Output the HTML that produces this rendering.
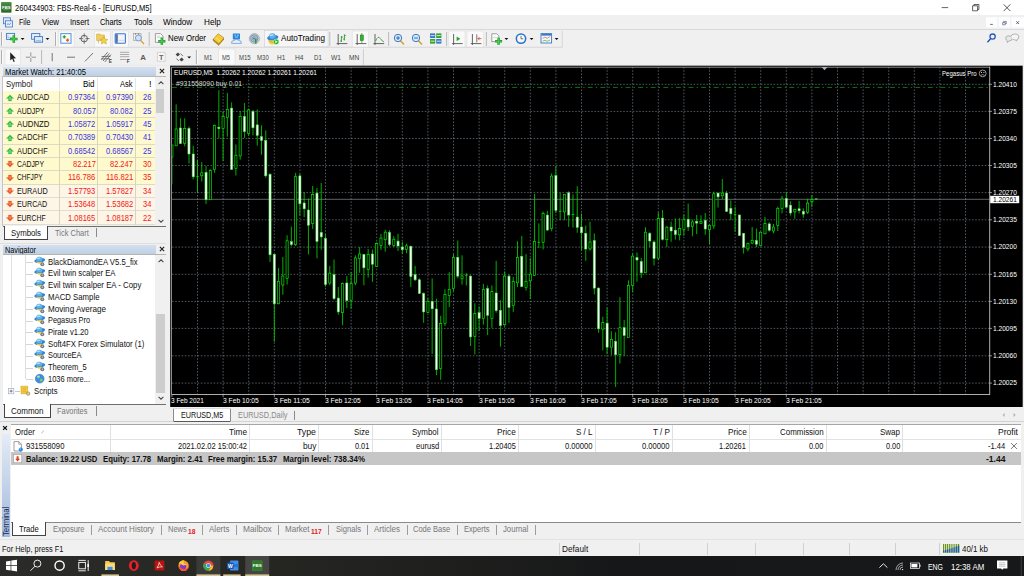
<!DOCTYPE html>
<html><head><meta charset="utf-8"><title>260434903: FBS-Real-6 - [EURUSD,M5]</title>
<style>
*{box-sizing:border-box;margin:0;padding:0}
html,body{width:1024px;height:576px;overflow:hidden;background:#f0f0f0}
body{position:relative;font-family:"Liberation Sans",sans-serif;font-size:9px;color:#000;line-height:1}
.a{position:absolute}
.t{position:absolute;white-space:pre;transform-origin:0 50%}
svg{position:absolute;left:0;top:0;overflow:visible}
.gr{stroke:#909eae;stroke-width:0.55;stroke-dasharray:1.6 1.6}
.wk{stroke:#00e400;stroke-width:0.78}
.dj2{stroke:#20ff20;stroke-width:1.1}
.dj{stroke:#00e000;stroke-width:0.8}
.bh{fill:#000;stroke:#00ea00;stroke-width:0.68}
.bw{fill:#fff;stroke:#40e040;stroke-width:0.58}

</style></head>
<body>
<div class="a" style="left:0px;top:0px;width:1024px;height:15px;background:#fff;"></div>
<svg class="a" style="left:1px;top:2.2px" width="11" height="11" viewBox="0 0 11 11"><defs><linearGradient id="fg" x1="0" y1="0" x2="0" y2="1"><stop offset="0" stop-color="#4a8a48"/><stop offset="1" stop-color="#2a6428"/></linearGradient></defs><rect x="0" y="0" width="10.6" height="10.7" rx="0.8" fill="#5a9a52"/><rect x="0.5" y="0.5" width="9.6" height="9.7" rx="0.5" fill="url(#fg)"/><text x="5.3" y="6.6" font-family="Liberation Sans,sans-serif" font-weight="bold" font-size="4.2" fill="#fff" text-anchor="middle">FBS</text><rect x="2.2" y="7.6" width="6.2" height="0.5" fill="#9fc89a"/></svg>
<span class="t" style="left:14.80px;top:1.60px;height:11.5px;line-height:11.5px;font-size:9.6px;color:#000;transform:scaleX(0.7853);">260434903: FBS-Real-6 - [EURUSD,M5]</span>
<svg class="a" style="left:930px;top:0px" width="94" height="15" viewBox="0 0 94 15"><path d="M11.7 7.6 H18.2" stroke="#222" stroke-width="0.7" fill="none"/><path d="M42.6 5.8 H47.6 V10.8 H42.6 Z M43.9 5.8 V4.5 H48.9 V9.5 H47.6" stroke="#222" stroke-width="0.7" fill="none"/><path d="M73.6 4.3 L80.4 11.1 M80.4 4.3 L73.6 11.1" stroke="#222" stroke-width="0.75" fill="none"/></svg>
<div class="a" style="left:0px;top:15px;width:1024px;height:15px;background:#f0f0f0;"></div>
<svg class="a" style="left:2.8px;top:16.8px" width="10" height="11" viewBox="0 0 10 11"><rect x="0.5" y="0.8" width="7" height="6" fill="#dce9fa" stroke="#3f74c8" stroke-width="0.8"/><rect x="2.5" y="3.8" width="7" height="6.2" fill="#eaf2fd" stroke="#3f74c8" stroke-width="0.8"/><path d="M3.8 8.2 L5 6.4 L6.3 8 L8 5.6" stroke="#3a67b5" stroke-width="0.6" fill="none"/></svg>
<span class="t" style="left:18.50px;top:16.00px;height:11.5px;line-height:11.5px;font-size:9.6px;color:#000;transform:scaleX(0.7434);">File</span>
<span class="t" style="left:41.70px;top:16.00px;height:11.5px;line-height:11.5px;font-size:9.6px;color:#000;transform:scaleX(0.8242);">View</span>
<span class="t" style="left:69.70px;top:16.00px;height:11.5px;line-height:11.5px;font-size:9.6px;color:#000;transform:scaleX(0.7917);">Insert</span>
<span class="t" style="left:100.20px;top:16.00px;height:11.5px;line-height:11.5px;font-size:9.6px;color:#000;transform:scaleX(0.7713);">Charts</span>
<span class="t" style="left:133.50px;top:16.00px;height:11.5px;line-height:11.5px;font-size:9.6px;color:#000;transform:scaleX(0.8257);">Tools</span>
<span class="t" style="left:163.20px;top:16.00px;height:11.5px;line-height:11.5px;font-size:9.6px;color:#000;transform:scaleX(0.8586);">Window</span>
<span class="t" style="left:203.70px;top:16.00px;height:11.5px;line-height:11.5px;font-size:9.6px;color:#000;transform:scaleX(0.8513);">Help</span>
<svg class="a" style="left:984px;top:16px" width="40" height="13" viewBox="0 0 40 13"><rect x="2" y="1.2" width="11.4" height="10.4" fill="#fdfdfd"/><rect x="14.6" y="1.2" width="11.6" height="10.4" fill="#fdfdfd"/><rect x="27.4" y="1.2" width="12.6" height="10.4" fill="#fdfdfd"/><path d="M6.2 8.4 H8.8" stroke="#3a4a78" stroke-width="0.8"/><path d="M18.6 6.6 H21.2 V8.8 H18.6 Z M19.6 6.6 V5.4 H22.3 V7.7 H21.2" stroke="#3a4a78" stroke-width="0.6" fill="none"/><path d="M32.3 5.2 L35 8 M35 5.2 L32.3 8" stroke="#3a4a78" stroke-width="0.8"/></svg>
<div class="a" style="left:0px;top:29px;width:1024px;height:1px;background:#d9d9d9;"></div>
<svg class="a" style="left:0px;top:0px" width="1024" height="48" viewBox="0 0 1024 48"><path d="M0 47.3 H562.3 V31" stroke="#d2d2d2" stroke-width="0.8" fill="none"/><path d="M1.6 32 V46" stroke="#a8a8a8" stroke-width="1"/><path d="M2.6 32 V46" stroke="#fff" stroke-width="0.8"/><rect x="6.6" y="33.4" width="8" height="6" fill="#e8f1fc" stroke="#3b78c4" stroke-width="0.9"/><path d="M8 37.8 V35.4 M8 37.8 H12" stroke="#5b8fd0" stroke-width="0.5" fill="none"/><path d="M13.8 35.2 V42.8 M10 39 H17.6" stroke="#1e9a28" stroke-width="2.5"/><path d="M13.8 35.8 V42.2 M10.6 39 H17" stroke="#4cd34c" stroke-width="1.1"/><path d="M20.700000000000003 37.9 H24.5 L22.6 39.9Z" fill="#111"/><rect x="31.6" y="33.6" width="8.2" height="5.6" fill="#e8f1fc" stroke="#3b78c4" stroke-width="0.9"/><rect x="34.4" y="36.6" width="8.2" height="5.6" fill="#dfeafa" stroke="#3b78c4" stroke-width="0.9"/><path d="M35.8 40.6 H41" stroke="#5b8fd0" stroke-width="0.5"/><path d="M45.6 37.9 H49.4 L47.5 39.9Z" fill="#111"/><path d="M55.6 32 V46" stroke="#a8a8a8" stroke-width="1"/><path d="M56.6 32 V46" stroke="#fff" stroke-width="0.8"/><rect x="58.2" y="31" width="16" height="16" fill="#f9f9f9" stroke="#dedede" stroke-width="0.6"/><rect x="60.8" y="33.6" width="10.2" height="9.6" fill="#fff" stroke="#5b9be0" stroke-width="1.1"/><path d="M64.3 35 L66.5 37.2 H65.2 V38.4 H63.4 V37.2 H62.1Z" fill="#2fa32f"/><path d="M67.6 42 L65.4 39.8 H66.7 V38.6 H68.5 V39.8 H69.8Z" fill="#e0582a"/><circle cx="84.2" cy="38.6" r="3.3" fill="none" stroke="#555" stroke-width="0.9"/><path d="M84.2 33.4 V43.8 M79 38.6 H89.4" stroke="#555" stroke-width="0.8"/><circle cx="84.2" cy="38.6" r="1.2" fill="#f0f0f0"/><rect x="94.3" y="31" width="16" height="16" fill="#f9f9f9" stroke="#dedede" stroke-width="0.6"/><path d="M96.6 34 H100 L100.8 35 H104.4 V40.6 H96.6Z" fill="#f0cf5a" stroke="#c8a030" stroke-width="0.5"/><path d="M98.4 40.6 V43.4" stroke="#888" stroke-width="0.5"/><path d="M103.8 36.6 L105 39.2 L107.8 39.5 L105.7 41.3 L106.4 44 L103.8 42.6 L101.4 44 L102 41.3 L99.9 39.5 L102.7 39.2Z" fill="#f5d23c" stroke="#c09a20" stroke-width="0.5"/><rect x="112.6" y="31" width="16" height="16" fill="#f9f9f9" stroke="#dedede" stroke-width="0.6"/><rect x="115.2" y="33.8" width="10.2" height="9.4" rx="0.8" fill="#eef4fc" stroke="#3b78c4" stroke-width="1.1"/><rect x="115.6" y="34.2" width="2.2" height="8.6" fill="#3b78c4"/><path d="M116.7 35.6 V40" stroke="#e04030" stroke-width="0.5"/><path d="M118.6 40.4 H124.6" stroke="#d8a0a0" stroke-width="0.4"/><rect x="133.4" y="33.4" width="7.6" height="7" fill="#f4f0e0" stroke="#9a9a9a" stroke-width="0.6"/><circle cx="138.4" cy="38" r="3" fill="#cfe4f8" stroke="#5b8fd0" stroke-width="0.8"/><path d="M140.6 40.4 L144 44" stroke="#d8a020" stroke-width="1.3"/><path d="M135.6 33 V35 M138.6 33 V35" stroke="#666" stroke-width="0.6"/><path d="M149.2 32 V46" stroke="#b4b4b4" stroke-width="0.9"/><path d="M155.4 33.6 H160.6 L163 36 V42.4 H155.4Z" fill="#fff" stroke="#777" stroke-width="0.7"/><path d="M156.8 36 H160 M156.8 37.6 H161" stroke="#aaa" stroke-width="0.5"/><path d="M161.8 37.6 V44.8 M158.2 41.2 H165.4" stroke="#1e9a28" stroke-width="2.4"/><path d="M161.8 38.2 V44.2 M158.8 41.2 H164.8" stroke="#4cd34c" stroke-width="1"/><path d="M213 39.4 L218.2 33.8 L224 38 L218.6 43.8Z" fill="#f6cc34" stroke="#a87818" stroke-width="0.6"/><path d="M213 39.4 L213.4 41 L218.8 45.4 L218.6 43.8Z" fill="#c89420" stroke="#8a6210" stroke-width="0.4"/><path d="M218.6 43.8 L218.8 45.4 L224 39.4 L224 38Z" fill="#b88418"/><path d="M215.6 37.6 L220.6 41.4" stroke="#fbe890" stroke-width="0.8"/><rect x="232.8" y="33.4" width="7.2" height="6" rx="0.6" fill="#2a86dc"/><path d="M234.4 35.2 H236 M237 35.2 H238.8 M235 37 H238" stroke="#d8ecff" stroke-width="0.7"/><path d="M231.6 43.4 Q231 40.6 234 40.4 Q236.4 38.4 238.8 40.4 Q241.8 40.6 241.4 43.4Z" fill="#e8f0fa" stroke="#5b8fd0" stroke-width="0.7"/><circle cx="254.4" cy="38.6" r="5.2" fill="#c2cad0" stroke="#98a2aa" stroke-width="0.6"/><circle cx="254.2" cy="38.4" r="3.6" fill="none" stroke="#6a86a2" stroke-width="0.8"/><circle cx="254.2" cy="38.4" r="2" fill="none" stroke="#6a86a2" stroke-width="0.6"/><circle cx="254" cy="38.4" r="0.9" fill="#2a6acc"/><rect x="255" y="38.6" width="1.5" height="5" fill="#2a9a3a"/><rect x="264.6" y="30.6" width="63.5" height="16.2" fill="#f6f6f6" stroke="#d4d4d4" stroke-width="0.7"/><path d="M267.6 38.6 L269.4 43.6 Q272.6 45.4 276 43.4 L277.6 38.6Z" fill="#f0cc40"/><path d="M268.6 41 Q272.6 43.2 276.8 41" stroke="#c89a20" stroke-width="0.5" fill="none"/><g transform="rotate(-8 272.6 37)"><ellipse cx="272.7" cy="37.6" rx="5.7" ry="2.6" fill="#2f86d4"/><ellipse cx="272.5" cy="36" rx="3.3" ry="2.7" fill="#5eaeea"/><ellipse cx="272" cy="35" rx="2" ry="0.9" fill="#b0dcf8"/></g><circle cx="276.2" cy="41.8" r="2.7" fill="#22b022" stroke="#eaffea" stroke-width="0.5"/><path d="M275.3 40.3 L277.8 41.8 L275.3 43.3Z" fill="#fff"/><path d="M330 32 V46" stroke="#a8a8a8" stroke-width="1"/><path d="M331 32 V46" stroke="#fff" stroke-width="0.8"/><path d="M338.2 34 V45 M336.6 43.6 H347.4" stroke="#555" stroke-width="0.9" fill="none"/><path d="M341.4 36 V42 M340.2 41 H341.4 M341.4 37.2 H342.8" stroke="#2a9a2a" stroke-width="0.9" fill="none"/><path d="M344.4 34.4 V40.4 M343.2 39.2 H344.4 M344.4 35.6 H345.8" stroke="#2a9a2a" stroke-width="0.9" fill="none"/><rect x="352.2" y="31" width="16.4" height="16" fill="#f9f9f9" stroke="#dedede" stroke-width="0.6"/><path d="M357.2 34 V45 M355.6 43.6 H366.4" stroke="#555" stroke-width="0.9" fill="none"/><path d="M361.8 33 V43" stroke="#1a7a1a" stroke-width="0.6"/><rect x="360.2" y="35" width="3.2" height="5.6" fill="#2fb02f" stroke="#1a7a1a" stroke-width="0.5"/><path d="M375 34 V45 M373.4 43.6 H384.2" stroke="#555" stroke-width="0.9" fill="none"/><path d="M375.6 41 Q378 35 380.4 38.6 T384 41.6" stroke="#2a9a2a" stroke-width="0.8" fill="none"/><path d="M388.6 32 V46" stroke="#b4b4b4" stroke-width="0.9"/><path d="M400.4 40.8 L404 44.6" stroke="#d8a020" stroke-width="1.5"/><circle cx="398" cy="38" r="3.7" fill="#d8ebfb" stroke="#3b78c4" stroke-width="1"/><path d="M396 38 H400" stroke="#2a5aa0" stroke-width="0.9"/><path d="M398 36 V40" stroke="#2a5aa0" stroke-width="0.9"/><path d="M418.4 40.8 L422 44.6" stroke="#d8a020" stroke-width="1.5"/><circle cx="416" cy="38" r="3.7" fill="#d8ebfb" stroke="#3b78c4" stroke-width="1"/><path d="M414 38 H418" stroke="#2a5aa0" stroke-width="0.9"/><rect x="430" y="33.4" width="5.2" height="4.6" fill="#3b78c4"/><rect x="436.2" y="33.4" width="5.2" height="4.6" fill="#2fa32f"/><rect x="430" y="39" width="5.2" height="4.6" fill="#2fa32f"/><rect x="436.2" y="39" width="5.2" height="4.6" fill="#3b78c4"/><path d="M430.6 35.6 H434.6 M436.8 35.6 H440.8 M430.6 41.2 H434.6 M436.8 41.2 H440.8" stroke="#fff" stroke-width="0.8"/><path d="M446.6 32 V46" stroke="#b4b4b4" stroke-width="0.9"/><rect x="448.8" y="31" width="16.2" height="16" fill="#f9f9f9" stroke="#dedede" stroke-width="0.6"/><path d="M453.6 34 V45 M452 43.6 H462.6" stroke="#555" stroke-width="0.9" fill="none"/><path d="M456.6 36.4 L460.4 38.8 L456.6 41.2Z" fill="#2fa32f"/><rect x="467" y="31" width="16.6" height="16" fill="#f9f9f9" stroke="#dedede" stroke-width="0.6"/><path d="M472.4 34 V45 M470.8 43.6 H481.4" stroke="#555" stroke-width="0.9" fill="none"/><path d="M476.8 34.4 V42.4" stroke="#555" stroke-width="0.8"/><path d="M478 38.6 H481.4 M479.6 37 L478 38.6 L479.6 40.2" stroke="#d8481e" stroke-width="0.8" fill="none"/><path d="M486.4 32 V46" stroke="#b4b4b4" stroke-width="0.9"/><path d="M491.8 33.8 H496.8 L498.8 35.8 V41.6 H491.8Z" fill="#fff" stroke="#777" stroke-width="0.7"/><path d="M493 38.4 L494.4 36.6 L496 38.2 L497.6 36.8" stroke="#999" stroke-width="0.5" fill="none"/><path d="M498.6 37.8 V44.8 M495.1 41.3 H502.1" stroke="#1e9a28" stroke-width="2.4"/><path d="M498.6 38.4 V44.2 M495.7 41.3 H501.5" stroke="#4cd34c" stroke-width="1"/><path d="M504.5 37.9 H508.29999999999995 L506.4 39.9Z" fill="#111"/><circle cx="521" cy="38.6" r="5.4" fill="#2a72c8"/><circle cx="521" cy="38.6" r="3.9" fill="#f4f8fc"/><path d="M521 36 V38.8 H523.2" stroke="#444" stroke-width="0.7" fill="none"/><path d="M529.7 37.9 H533.5 L531.6 39.9Z" fill="#111"/><rect x="541" y="33.6" width="10.6" height="9.4" fill="#f4f8fc" stroke="#3b78c4" stroke-width="0.9"/><rect x="541.4" y="34" width="9.8" height="1.6" fill="#3b78c4"/><path d="M542.6 38.4 L545 37 L547 38.4 L550 36.6" stroke="#d8481e" stroke-width="0.6" fill="none"/><path d="M542.6 41.2 L545 40.2 L547 41.4 L550 40" stroke="#2a9a2a" stroke-width="0.6" fill="none"/><path d="M554.7 37.9 H558.5 L556.6 39.9Z" fill="#111"/><circle cx="992.6" cy="36.6" r="2.6" fill="#eaf2fc" stroke="#2a5ab4" stroke-width="1.3"/><path d="M990.6 38.8 L987.4 42.2" stroke="#2a5ab4" stroke-width="1.5"/><path d="M1006 39.2 Q1005 36.2 1008.6 35.8 Q1012.2 35.6 1012.4 38.2 Q1012.4 40.8 1008.8 41 L1007.4 42.6 L1007.2 40.8 Q1006.2 40.4 1006 39.2Z" fill="#e8e8e8" stroke="#8a8a8a" stroke-width="0.6"/><path d="M1011 36.4 Q1011.4 33.8 1015 34 Q1019 34.2 1018.8 37 Q1018.6 39.4 1016.8 39.6 L1016.6 41 L1015 39.8 Q1013.4 39.8 1012.6 39.2" fill="#f4f4f4" stroke="#8a8a8a" stroke-width="0.6"/></svg>
<span class="t" style="left:168.00px;top:31.90px;height:11.5px;line-height:11.5px;font-size:9.6px;color:#000;transform:scaleX(0.8191);">New Order</span>
<span class="t" style="left:281.00px;top:31.90px;height:11.5px;line-height:11.5px;font-size:9.6px;color:#000;transform:scaleX(0.8474);">AutoTrading</span>
<svg class="a" style="left:0px;top:0px" width="1024" height="66" viewBox="0 0 1024 66"><path d="M0 65.4 H1024" stroke="#e4e4e4" stroke-width="0.6" fill="none"/><path d="M1.6 50 V64" stroke="#a8a8a8" stroke-width="1"/><path d="M2.6 50 V64" stroke="#fff" stroke-width="0.8"/><rect x="5" y="49" width="15.6" height="16" fill="#f9f9f9" stroke="#dedede" stroke-width="0.6"/><path d="M10.2 52.2 V60.6 L12.2 58.8 L13.6 62 L14.8 61.4 L13.4 58.4 L16 58.2Z" fill="#222"/><path d="M30.8 52.4 V62 M25.8 57.2 H36" stroke="#8a8a8a" stroke-width="0.9"/><rect x="30" y="56.4" width="1.6" height="1.6" fill="#f0f0f0"/><path d="M41.6 50 V64" stroke="#b4b4b4" stroke-width="0.9"/><path d="M52.2 53 V61.2" stroke="#666" stroke-width="0.9"/><path d="M67 57.2 H75" stroke="#666" stroke-width="0.9"/><path d="M85 61.4 L93 53" stroke="#555" stroke-width="0.8"/><path d="M101.4 59.6 L107.6 52.2 M103 61 L109.4 53.4 M104.8 62 L111 54.6 M101.6 56.6 L110.6 56.2 M101 59 L109.6 58.6" stroke="#555" stroke-width="0.75"/><text x="108.8" y="63.3" font-family="Liberation Sans,sans-serif" font-weight="bold" font-size="4.8" fill="#444">E</text><path d="M120 52.3 H129.2 M120 54.5 H129.2 M120 56.7 H129.2 M120 59.5 H126.4" stroke="#8c8c8c" stroke-width="0.7"/><text x="126.8" y="63.3" font-family="Liberation Sans,sans-serif" font-weight="bold" font-size="4.8" fill="#444">F</text><text x="140.2" y="59.8" font-family="Liberation Sans,sans-serif" font-weight="bold" font-size="7.8" fill="#5a5a5a">A</text><rect x="157.4" y="52.4" width="7.8" height="9" fill="#f6f6f6" stroke="#a0a0a0" stroke-width="0.6" stroke-dasharray="0.8 0.6"/><text x="159" y="60" font-family="Liberation Sans,sans-serif" font-weight="bold" font-size="7.4" fill="#666">T</text><path d="M175.6 54.4 L178 52.4 L180 54.6 L177.6 56.4Z M179.4 59.4 L181.8 57.6 L183.8 59.8 L181.4 61.6Z" fill="#444"/><path d="M176.4 58.6 L179 61 M180.4 53.6 L183 56" stroke="#444" stroke-width="0.7"/><path d="M187.29999999999998 56.5 H191.1 L189.2 58.5Z" fill="#111"/><path d="M196.4 50 V64" stroke="#a8a8a8" stroke-width="1"/><path d="M197.4 50 V64" stroke="#fff" stroke-width="0.8"/><rect x="218.6" y="49" width="16.4" height="16" fill="#f9f9f9" stroke="#dedede" stroke-width="0.6"/><path d="M363.4 49 V65" stroke="#c4c4c4" stroke-width="0.8"/></svg>
<span class="t" style="left:204.20px;top:53.95px;height:8.6px;line-height:8.6px;font-size:7.2px;color:#444;transform:scaleX(0.8300);">M1</span>
<span class="t" style="left:222.00px;top:53.95px;height:8.6px;line-height:8.6px;font-size:7.2px;color:#444;transform:scaleX(0.8000);">M5</span>
<span class="t" style="left:239.00px;top:53.95px;height:8.6px;line-height:8.6px;font-size:7.2px;color:#444;transform:scaleX(0.8366);">M15</span>
<span class="t" style="left:257.20px;top:53.95px;height:8.6px;line-height:8.6px;font-size:7.2px;color:#444;transform:scaleX(0.8438);">M30</span>
<span class="t" style="left:277.20px;top:53.95px;height:8.6px;line-height:8.6px;font-size:7.2px;color:#444;transform:scaleX(0.9019);">H1</span>
<span class="t" style="left:295.00px;top:53.95px;height:8.6px;line-height:8.6px;font-size:7.2px;color:#444;transform:scaleX(0.9236);">H4</span>
<span class="t" style="left:313.70px;top:53.95px;height:8.6px;line-height:8.6px;font-size:7.2px;color:#444;transform:scaleX(0.8475);">D1</span>
<span class="t" style="left:331.00px;top:53.95px;height:8.6px;line-height:8.6px;font-size:7.2px;color:#444;transform:scaleX(0.9275);">W1</span>
<span class="t" style="left:348.70px;top:53.95px;height:8.6px;line-height:8.6px;font-size:7.2px;color:#444;transform:scaleX(0.9207);">MN</span>
<div class="a" style="left:0px;top:66px;width:168px;height:178px;background:#f0f0f0;"></div>
<div class="a" style="left:2.8px;top:67.2px;width:153.2px;height:8.6px;background:linear-gradient(#d3dfee,#bfd0e4);"></div>
<span class="t" style="left:4.70px;top:66.70px;height:10.3px;line-height:10.3px;font-size:8.6px;color:#000;transform:scaleX(0.8909);">Market Watch: 21:40:05</span>
<svg class="a" style="left:158px;top:67.2px" width="8" height="8" viewBox="0 0 8 8"><path d="M1.9 1.9 L6.1 6.1 M6.1 1.9 L1.9 6.1" stroke="#222" stroke-width="1.2" fill="none"/></svg>
<div class="a" style="left:2.8px;top:76px;width:163.2px;height:0.8px;background:#b8b8b8;"></div>
<div class="a" style="left:3px;top:76.8px;width:152px;height:149px;background:#fff;"></div>
<span class="t" style="left:6.40px;top:78.00px;height:11.5px;line-height:11.5px;font-size:9.6px;color:#222;transform:scaleX(0.8250);">Symbol</span>
<span class="t" style="left:83.30px;top:78.00px;height:11.5px;line-height:11.5px;font-size:9.6px;color:#000;transform:scaleX(0.8288);">Bid</span>
<span class="t" style="left:120.10px;top:78.00px;height:11.5px;line-height:11.5px;font-size:9.6px;color:#000;transform:scaleX(0.7812);">Ask</span>
<span class="t" style="left:148.99px;top:78.00px;height:11.5px;line-height:11.5px;font-size:9.6px;color:#000;transform:scaleX(0.9400);">!</span>
<div class="a" style="left:58.8px;top:78px;width:1px;height:12px;background:#e6e6e6;"></div>
<div class="a" style="left:96.9px;top:78px;width:1px;height:12px;background:#e6e6e6;"></div>
<div class="a" style="left:134.7px;top:78px;width:1px;height:12px;background:#e6e6e6;"></div>
<div class="a" style="left:3px;top:90.6px;width:152px;height:13.459999999999999px;background:#fffacd;"></div>
<svg class="a" style="left:5.5px;top:93.58px" width="8" height="8" viewBox="0 0 8 8"><path d="M4 0.8 L7.8 4.5 H5.7 V7 H2.3 V4.5 H0.2 Z" fill="#2cae38" stroke="#8fdc8a" stroke-width="0.45"/><path d="M4 2.2 L5.6 4 H4.9 V6 H3.1 V4 H2.4Z" fill="#5fdc78"/></svg>
<span class="t" style="left:16.60px;top:91.28px;height:11.5px;line-height:11.5px;font-size:9.6px;color:#111;transform:scaleX(0.7972);">AUDCAD</span>
<span class="t" style="left:68.20px;top:91.28px;height:11.5px;line-height:11.5px;font-size:9.6px;color:#3a32e6;transform:scaleX(0.7841);">0.97364</span>
<span class="t" style="left:105.90px;top:91.28px;height:11.5px;line-height:11.5px;font-size:9.6px;color:#3a32e6;transform:scaleX(0.7841);">0.97390</span>
<span class="t" style="left:143.20px;top:91.28px;height:11.5px;line-height:11.5px;font-size:9.6px;color:#3a32e6;transform:scaleX(0.7871);">26</span>
<div class="a" style="left:3px;top:103.96px;width:152px;height:13.459999999999999px;background:#fffacd;"></div>
<svg class="a" style="left:5.5px;top:106.93999999999998px" width="8" height="8" viewBox="0 0 8 8"><path d="M4 0.8 L7.8 4.5 H5.7 V7 H2.3 V4.5 H0.2 Z" fill="#2cae38" stroke="#8fdc8a" stroke-width="0.45"/><path d="M4 2.2 L5.6 4 H4.9 V6 H3.1 V4 H2.4Z" fill="#5fdc78"/></svg>
<span class="t" style="left:16.60px;top:104.64px;height:11.5px;line-height:11.5px;font-size:9.6px;color:#111;transform:scaleX(0.7264);">AUDJPY</span>
<span class="t" style="left:72.60px;top:104.64px;height:11.5px;line-height:11.5px;font-size:9.6px;color:#3a32e6;transform:scaleX(0.7770);">80.057</span>
<span class="t" style="left:110.30px;top:104.64px;height:11.5px;line-height:11.5px;font-size:9.6px;color:#3a32e6;transform:scaleX(0.7770);">80.082</span>
<span class="t" style="left:143.20px;top:104.64px;height:11.5px;line-height:11.5px;font-size:9.6px;color:#3a32e6;transform:scaleX(0.7871);">25</span>
<div class="a" style="left:3px;top:117.32px;width:152px;height:13.459999999999999px;background:#fffacd;"></div>
<svg class="a" style="left:5.5px;top:120.3px" width="8" height="8" viewBox="0 0 8 8"><path d="M4 0.8 L7.8 4.5 H5.7 V7 H2.3 V4.5 H0.2 Z" fill="#2cae38" stroke="#8fdc8a" stroke-width="0.45"/><path d="M4 2.2 L5.6 4 H4.9 V6 H3.1 V4 H2.4Z" fill="#5fdc78"/></svg>
<span class="t" style="left:16.60px;top:118.00px;height:11.5px;line-height:11.5px;font-size:9.6px;color:#111;transform:scaleX(0.8128);">AUDNZD</span>
<span class="t" style="left:68.20px;top:118.00px;height:11.5px;line-height:11.5px;font-size:9.6px;color:#3a32e6;transform:scaleX(0.7841);">1.05872</span>
<span class="t" style="left:105.90px;top:118.00px;height:11.5px;line-height:11.5px;font-size:9.6px;color:#3a32e6;transform:scaleX(0.7841);">1.05917</span>
<span class="t" style="left:143.20px;top:118.00px;height:11.5px;line-height:11.5px;font-size:9.6px;color:#3a32e6;transform:scaleX(0.7871);">45</span>
<div class="a" style="left:3px;top:130.68px;width:152px;height:13.459999999999999px;background:#fffacd;"></div>
<svg class="a" style="left:5.5px;top:133.66000000000003px" width="8" height="8" viewBox="0 0 8 8"><path d="M4 0.8 L7.8 4.5 H5.7 V7 H2.3 V4.5 H0.2 Z" fill="#2cae38" stroke="#8fdc8a" stroke-width="0.45"/><path d="M4 2.2 L5.6 4 H4.9 V6 H3.1 V4 H2.4Z" fill="#5fdc78"/></svg>
<span class="t" style="left:16.60px;top:131.36px;height:11.5px;line-height:11.5px;font-size:9.6px;color:#111;transform:scaleX(0.7678);">CADCHF</span>
<span class="t" style="left:68.20px;top:131.36px;height:11.5px;line-height:11.5px;font-size:9.6px;color:#3a32e6;transform:scaleX(0.7841);">0.70389</span>
<span class="t" style="left:105.90px;top:131.36px;height:11.5px;line-height:11.5px;font-size:9.6px;color:#3a32e6;transform:scaleX(0.7841);">0.70430</span>
<span class="t" style="left:143.20px;top:131.36px;height:11.5px;line-height:11.5px;font-size:9.6px;color:#3a32e6;transform:scaleX(0.7871);">41</span>
<div class="a" style="left:3px;top:144.04px;width:152px;height:13.459999999999999px;background:#fffacd;"></div>
<svg class="a" style="left:5.5px;top:147.02px" width="8" height="8" viewBox="0 0 8 8"><path d="M4 0.8 L7.8 4.5 H5.7 V7 H2.3 V4.5 H0.2 Z" fill="#2cae38" stroke="#8fdc8a" stroke-width="0.45"/><path d="M4 2.2 L5.6 4 H4.9 V6 H3.1 V4 H2.4Z" fill="#5fdc78"/></svg>
<span class="t" style="left:16.60px;top:144.72px;height:11.5px;line-height:11.5px;font-size:9.6px;color:#111;transform:scaleX(0.7678);">AUDCHF</span>
<span class="t" style="left:68.20px;top:144.72px;height:11.5px;line-height:11.5px;font-size:9.6px;color:#3a32e6;transform:scaleX(0.7841);">0.68542</span>
<span class="t" style="left:105.90px;top:144.72px;height:11.5px;line-height:11.5px;font-size:9.6px;color:#3a32e6;transform:scaleX(0.7841);">0.68567</span>
<span class="t" style="left:143.20px;top:144.72px;height:11.5px;line-height:11.5px;font-size:9.6px;color:#3a32e6;transform:scaleX(0.7871);">25</span>
<div class="a" style="left:3px;top:157.4px;width:152px;height:13.459999999999999px;background:#fffacd;"></div>
<svg class="a" style="left:5.5px;top:160.38px" width="8" height="8" viewBox="0 0 8 8"><path d="M4 7.2 L7.8 3.5 H5.7 V1 H2.3 V3.5 H0.2 Z" fill="#dc4a1c" stroke="#f2a884" stroke-width="0.45"/><path d="M4 5.8 L5.6 4 H4.9 V2 H3.1 V4 H2.4Z" fill="#ff7a4a"/></svg>
<span class="t" style="left:16.60px;top:158.08px;height:11.5px;line-height:11.5px;font-size:9.6px;color:#111;transform:scaleX(0.7132);">CADJPY</span>
<span class="t" style="left:72.60px;top:158.08px;height:11.5px;line-height:11.5px;font-size:9.6px;color:#f02020;transform:scaleX(0.7770);">82.217</span>
<span class="t" style="left:110.30px;top:158.08px;height:11.5px;line-height:11.5px;font-size:9.6px;color:#f02020;transform:scaleX(0.7770);">82.247</span>
<span class="t" style="left:143.20px;top:158.08px;height:11.5px;line-height:11.5px;font-size:9.6px;color:#f02020;transform:scaleX(0.7871);">30</span>
<div class="a" style="left:3px;top:170.76px;width:152px;height:13.459999999999999px;background:#fffacd;"></div>
<svg class="a" style="left:5.5px;top:173.74px" width="8" height="8" viewBox="0 0 8 8"><path d="M4 7.2 L7.8 3.5 H5.7 V1 H2.3 V3.5 H0.2 Z" fill="#dc4a1c" stroke="#f2a884" stroke-width="0.45"/><path d="M4 5.8 L5.6 4 H4.9 V2 H3.1 V4 H2.4Z" fill="#ff7a4a"/></svg>
<span class="t" style="left:16.60px;top:171.44px;height:11.5px;line-height:11.5px;font-size:9.6px;color:#111;transform:scaleX(0.6888);">CHFJPY</span>
<span class="t" style="left:68.20px;top:171.44px;height:11.5px;line-height:11.5px;font-size:9.6px;color:#f02020;transform:scaleX(0.8007);">116.786</span>
<span class="t" style="left:105.90px;top:171.44px;height:11.5px;line-height:11.5px;font-size:9.6px;color:#f02020;transform:scaleX(0.8007);">116.821</span>
<span class="t" style="left:143.20px;top:171.44px;height:11.5px;line-height:11.5px;font-size:9.6px;color:#f02020;transform:scaleX(0.7871);">35</span>
<div class="a" style="left:3px;top:184.12px;width:152px;height:13.459999999999999px;background:#fdf5e6;"></div>
<svg class="a" style="left:5.5px;top:187.10000000000002px" width="8" height="8" viewBox="0 0 8 8"><path d="M4 7.2 L7.8 3.5 H5.7 V1 H2.3 V3.5 H0.2 Z" fill="#dc4a1c" stroke="#f2a884" stroke-width="0.45"/><path d="M4 5.8 L5.6 4 H4.9 V2 H3.1 V4 H2.4Z" fill="#ff7a4a"/></svg>
<span class="t" style="left:16.60px;top:184.80px;height:11.5px;line-height:11.5px;font-size:9.6px;color:#111;transform:scaleX(0.7577);">EURAUD</span>
<span class="t" style="left:68.20px;top:184.80px;height:11.5px;line-height:11.5px;font-size:9.6px;color:#f02020;transform:scaleX(0.7841);">1.57793</span>
<span class="t" style="left:105.90px;top:184.80px;height:11.5px;line-height:11.5px;font-size:9.6px;color:#f02020;transform:scaleX(0.7841);">1.57827</span>
<span class="t" style="left:143.20px;top:184.80px;height:11.5px;line-height:11.5px;font-size:9.6px;color:#f02020;transform:scaleX(0.7871);">34</span>
<div class="a" style="left:3px;top:197.48px;width:152px;height:13.459999999999999px;background:#fdf5e6;"></div>
<svg class="a" style="left:5.5px;top:200.46px" width="8" height="8" viewBox="0 0 8 8"><path d="M4 7.2 L7.8 3.5 H5.7 V1 H2.3 V3.5 H0.2 Z" fill="#dc4a1c" stroke="#f2a884" stroke-width="0.45"/><path d="M4 5.8 L5.6 4 H4.9 V2 H3.1 V4 H2.4Z" fill="#ff7a4a"/></svg>
<span class="t" style="left:16.60px;top:198.16px;height:11.5px;line-height:11.5px;font-size:9.6px;color:#111;transform:scaleX(0.7479);">EURCAD</span>
<span class="t" style="left:68.20px;top:198.16px;height:11.5px;line-height:11.5px;font-size:9.6px;color:#f02020;transform:scaleX(0.7841);">1.53648</span>
<span class="t" style="left:105.90px;top:198.16px;height:11.5px;line-height:11.5px;font-size:9.6px;color:#f02020;transform:scaleX(0.7841);">1.53682</span>
<span class="t" style="left:143.20px;top:198.16px;height:11.5px;line-height:11.5px;font-size:9.6px;color:#f02020;transform:scaleX(0.7871);">34</span>
<div class="a" style="left:3px;top:210.84px;width:152px;height:13.459999999999999px;background:#fdf5e6;"></div>
<svg class="a" style="left:5.5px;top:213.82px" width="8" height="8" viewBox="0 0 8 8"><path d="M4 7.2 L7.8 3.5 H5.7 V1 H2.3 V3.5 H0.2 Z" fill="#dc4a1c" stroke="#f2a884" stroke-width="0.45"/><path d="M4 5.8 L5.6 4 H4.9 V2 H3.1 V4 H2.4Z" fill="#ff7a4a"/></svg>
<span class="t" style="left:16.60px;top:211.52px;height:11.5px;line-height:11.5px;font-size:9.6px;color:#111;transform:scaleX(0.7178);">EURCHF</span>
<span class="t" style="left:68.20px;top:211.52px;height:11.5px;line-height:11.5px;font-size:9.6px;color:#f02020;transform:scaleX(0.7841);">1.08165</span>
<span class="t" style="left:105.90px;top:211.52px;height:11.5px;line-height:11.5px;font-size:9.6px;color:#f02020;transform:scaleX(0.7841);">1.08187</span>
<span class="t" style="left:143.20px;top:211.52px;height:11.5px;line-height:11.5px;font-size:9.6px;color:#f02020;transform:scaleX(0.7871);">22</span>
<div class="a" style="left:3px;top:103.46px;width:152px;height:0.8px;background:#dedac4;"></div>
<div class="a" style="left:3px;top:116.82px;width:152px;height:0.8px;background:#dedac4;"></div>
<div class="a" style="left:3px;top:130.18px;width:152px;height:0.8px;background:#dedac4;"></div>
<div class="a" style="left:3px;top:143.54px;width:152px;height:0.8px;background:#dedac4;"></div>
<div class="a" style="left:3px;top:156.9px;width:152px;height:0.8px;background:#dedac4;"></div>
<div class="a" style="left:3px;top:170.26px;width:152px;height:0.8px;background:#dedac4;"></div>
<div class="a" style="left:3px;top:183.62px;width:152px;height:0.8px;background:#dedac4;"></div>
<div class="a" style="left:3px;top:196.98px;width:152px;height:0.8px;background:#e2ddd0;"></div>
<div class="a" style="left:3px;top:210.34px;width:152px;height:0.8px;background:#e2ddd0;"></div>
<div class="a" style="left:3px;top:223.7px;width:152px;height:0.8px;background:#e2ddd0;"></div>
<div class="a" style="left:58.8px;top:90.6px;width:0.9px;height:135.4px;background:#d9d4bc;"></div>
<div class="a" style="left:96.9px;top:90.6px;width:0.9px;height:135.4px;background:#d9d4bc;"></div>
<div class="a" style="left:134.7px;top:90.6px;width:0.9px;height:135.4px;background:#d9d4bc;"></div>
<div class="a" style="left:2.3px;top:76px;width:0.8px;height:150px;background:#c4c4c4;"></div>
<div class="a" style="left:3px;top:225.3px;width:163px;height:18.7px;background:#f0f0f0;"></div>
<div class="a" style="left:155px;top:78px;width:10.5px;height:147.3px;background:#f0f0f0;"></div>
<div class="a" style="left:155.6px;top:88.7px;width:8.8px;height:24.2px;background:#cdcdcd;"></div>
<svg class="a" style="left:156.5px;top:78.7px" width="8" height="8" viewBox="0 0 8 8"><path d="M1.6 5.2 L4 2.8 L6.4 5.2" stroke="#484848" stroke-width="1.05" fill="none"/></svg>
<svg class="a" style="left:156.5px;top:216.5px" width="8" height="8" viewBox="0 0 8 8"><path d="M1.6 2.8 L4 5.2 L6.4 2.8" stroke="#484848" stroke-width="1.05" fill="none"/></svg>
<div class="a" style="left:3px;top:225.8px;width:163px;height:1px;background:#6e6e6e;"></div>
<div class="a" style="left:3.5px;top:225.8px;width:44px;height:14px;background:#fff;border:1px solid #444;border-top:none"></div>
<span class="t" style="left:11.20px;top:226.50px;height:11.5px;line-height:11.5px;font-size:9.6px;color:#111;transform:scaleX(0.8153);">Symbols</span>
<span class="t" style="left:55.00px;top:226.50px;height:11.5px;line-height:11.5px;font-size:9.6px;color:#777;transform:scaleX(0.7795);">Tick Chart</span>
<div class="a" style="left:95.8px;top:228.3px;width:1px;height:9px;background:#8a8a8a;"></div>
<div class="a" style="left:0px;top:242.7px;width:166px;height:0.9px;background:#dfdfdf;"></div>
<div class="a" style="left:2.8px;top:245.4px;width:153.2px;height:8.8px;background:linear-gradient(#d3dfee,#bfd0e4);"></div>
<span class="t" style="left:4.70px;top:245.20px;height:10.3px;line-height:10.3px;font-size:8.6px;color:#000;transform:scaleX(0.8428);">Navigator</span>
<svg class="a" style="left:158px;top:245.3px" width="8" height="8" viewBox="0 0 8 8"><path d="M1.9 1.9 L6.1 6.1 M6.1 1.9 L1.9 6.1" stroke="#222" stroke-width="1.2" fill="none"/></svg>
<div class="a" style="left:3px;top:254.5px;width:152px;height:149.5px;background:#fff;"></div>
<div class="a" style="left:2.8px;top:254px;width:163.2px;height:0.7px;background:#b4b4b4;"></div>
<div class="a" style="left:11.3px;top:254.6px;width:0.8px;height:134.5px;background:#e2e2e2;"></div>
<div class="a" style="left:25.3px;top:254.6px;width:0.8px;height:124.6px;background:#dedede;"></div>
<div class="a" style="left:25.6px;top:262.1px;width:7.4px;height:0.8px;background:#d6d6d6;"></div>
<svg class="a" style="left:33.7px;top:255.70000000000002px" width="12" height="11" viewBox="0 0 12 11"><g transform="rotate(-9 5.5 4.5)"><ellipse cx="5.7" cy="4.5" rx="5.5" ry="2.3" fill="#2f86d4"/><ellipse cx="5.5" cy="3.1" rx="3.1" ry="2.4" fill="#5eaeea"/><ellipse cx="5" cy="2.2" rx="1.9" ry="0.8" fill="#b0dcf8"/></g><path d="M2.4 6 Q5 9.4 7.8 6.4 L7.4 5.4 Q5 7 2.8 5.2Z" fill="#f2d23c"/><circle cx="8.3" cy="8.2" r="2" fill="#7a7a7a"/><circle cx="8.3" cy="8.2" r="0.65" fill="#d8d8d8"/></svg>
<span class="t" style="left:48.30px;top:255.70px;height:11.5px;line-height:11.5px;font-size:9.6px;color:#111;transform:scaleX(0.8048);">BlackDiamondEA V5.5_fix</span>
<div class="a" style="left:25.6px;top:273.82px;width:7.4px;height:0.8px;background:#d6d6d6;"></div>
<svg class="a" style="left:33.7px;top:267.4200000000001px" width="12" height="11" viewBox="0 0 12 11"><g transform="rotate(-9 5.5 4.5)"><ellipse cx="5.7" cy="4.5" rx="5.5" ry="2.3" fill="#2f86d4"/><ellipse cx="5.5" cy="3.1" rx="3.1" ry="2.4" fill="#5eaeea"/><ellipse cx="5" cy="2.2" rx="1.9" ry="0.8" fill="#b0dcf8"/></g><path d="M2.4 6 Q5 9.4 7.8 6.4 L7.4 5.4 Q5 7 2.8 5.2Z" fill="#f2d23c"/><circle cx="8.3" cy="8.2" r="2" fill="#7a7a7a"/><circle cx="8.3" cy="8.2" r="0.65" fill="#d8d8d8"/></svg>
<span class="t" style="left:48.30px;top:267.42px;height:11.5px;line-height:11.5px;font-size:9.6px;color:#111;transform:scaleX(0.8012);">Evil twin scalper EA</span>
<div class="a" style="left:25.6px;top:285.54px;width:7.4px;height:0.8px;background:#d6d6d6;"></div>
<svg class="a" style="left:33.7px;top:279.14000000000004px" width="12" height="11" viewBox="0 0 12 11"><g transform="rotate(-9 5.5 4.5)"><ellipse cx="5.7" cy="4.5" rx="5.5" ry="2.3" fill="#2f86d4"/><ellipse cx="5.5" cy="3.1" rx="3.1" ry="2.4" fill="#5eaeea"/><ellipse cx="5" cy="2.2" rx="1.9" ry="0.8" fill="#b0dcf8"/></g><path d="M2.4 6 Q5 9.4 7.8 6.4 L7.4 5.4 Q5 7 2.8 5.2Z" fill="#f2d23c"/><circle cx="8.3" cy="8.2" r="2" fill="#7a7a7a"/><circle cx="8.3" cy="8.2" r="0.65" fill="#d8d8d8"/></svg>
<span class="t" style="left:48.30px;top:279.14px;height:11.5px;line-height:11.5px;font-size:9.6px;color:#111;transform:scaleX(0.8138);">Evil twin scalper EA - Copy</span>
<div class="a" style="left:25.6px;top:297.26px;width:7.4px;height:0.8px;background:#d6d6d6;"></div>
<svg class="a" style="left:33.7px;top:290.86000000000007px" width="12" height="11" viewBox="0 0 12 11"><g transform="rotate(-9 5.5 4.5)"><ellipse cx="5.7" cy="4.5" rx="5.5" ry="2.3" fill="#2f86d4"/><ellipse cx="5.5" cy="3.1" rx="3.1" ry="2.4" fill="#5eaeea"/><ellipse cx="5" cy="2.2" rx="1.9" ry="0.8" fill="#b0dcf8"/></g><path d="M2.4 6 Q5 9.4 7.8 6.4 L7.4 5.4 Q5 7 2.8 5.2Z" fill="#f2d23c"/><circle cx="8.3" cy="8.2" r="2" fill="#7a7a7a"/><circle cx="8.3" cy="8.2" r="0.65" fill="#d8d8d8"/></svg>
<span class="t" style="left:48.30px;top:290.86px;height:11.5px;line-height:11.5px;font-size:9.6px;color:#111;transform:scaleX(0.8116);">MACD Sample</span>
<div class="a" style="left:25.6px;top:308.98px;width:7.4px;height:0.8px;background:#d6d6d6;"></div>
<svg class="a" style="left:33.7px;top:302.58000000000004px" width="12" height="11" viewBox="0 0 12 11"><g transform="rotate(-9 5.5 4.5)"><ellipse cx="5.7" cy="4.5" rx="5.5" ry="2.3" fill="#2f86d4"/><ellipse cx="5.5" cy="3.1" rx="3.1" ry="2.4" fill="#5eaeea"/><ellipse cx="5" cy="2.2" rx="1.9" ry="0.8" fill="#b0dcf8"/></g><path d="M2.4 6 Q5 9.4 7.8 6.4 L7.4 5.4 Q5 7 2.8 5.2Z" fill="#f2d23c"/><circle cx="8.3" cy="8.2" r="2" fill="#7a7a7a"/><circle cx="8.3" cy="8.2" r="0.65" fill="#d8d8d8"/></svg>
<span class="t" style="left:48.30px;top:302.58px;height:11.5px;line-height:11.5px;font-size:9.6px;color:#111;transform:scaleX(0.8452);">Moving Average</span>
<div class="a" style="left:25.6px;top:320.7px;width:7.4px;height:0.8px;background:#d6d6d6;"></div>
<svg class="a" style="left:33.7px;top:314.30000000000007px" width="12" height="11" viewBox="0 0 12 11"><g transform="rotate(-9 5.5 4.5)"><ellipse cx="5.7" cy="4.5" rx="5.5" ry="2.3" fill="#2f86d4"/><ellipse cx="5.5" cy="3.1" rx="3.1" ry="2.4" fill="#5eaeea"/><ellipse cx="5" cy="2.2" rx="1.9" ry="0.8" fill="#b0dcf8"/></g><path d="M2.4 6 Q5 9.4 7.8 6.4 L7.4 5.4 Q5 7 2.8 5.2Z" fill="#f2d23c"/><circle cx="8.3" cy="8.2" r="2" fill="#7a7a7a"/><circle cx="8.3" cy="8.2" r="0.65" fill="#d8d8d8"/></svg>
<span class="t" style="left:48.30px;top:314.30px;height:11.5px;line-height:11.5px;font-size:9.6px;color:#111;transform:scaleX(0.7645);">Pegasus Pro</span>
<div class="a" style="left:25.6px;top:332.42px;width:7.4px;height:0.8px;background:#d6d6d6;"></div>
<svg class="a" style="left:33.7px;top:326.02000000000004px" width="12" height="11" viewBox="0 0 12 11"><g transform="rotate(-9 5.5 4.5)"><ellipse cx="5.7" cy="4.5" rx="5.5" ry="2.3" fill="#2f86d4"/><ellipse cx="5.5" cy="3.1" rx="3.1" ry="2.4" fill="#5eaeea"/><ellipse cx="5" cy="2.2" rx="1.9" ry="0.8" fill="#b0dcf8"/></g><path d="M2.4 6 Q5 9.4 7.8 6.4 L7.4 5.4 Q5 7 2.8 5.2Z" fill="#f2d23c"/><circle cx="8.3" cy="8.2" r="2" fill="#7a7a7a"/><circle cx="8.3" cy="8.2" r="0.65" fill="#d8d8d8"/></svg>
<span class="t" style="left:48.30px;top:326.02px;height:11.5px;line-height:11.5px;font-size:9.6px;color:#111;transform:scaleX(0.7910);">Pirate v1.20</span>
<div class="a" style="left:25.6px;top:344.14px;width:7.4px;height:0.8px;background:#d6d6d6;"></div>
<svg class="a" style="left:33.7px;top:337.74000000000007px" width="12" height="11" viewBox="0 0 12 11"><g transform="rotate(-9 5.5 4.5)"><ellipse cx="5.7" cy="4.5" rx="5.5" ry="2.3" fill="#2f86d4"/><ellipse cx="5.5" cy="3.1" rx="3.1" ry="2.4" fill="#5eaeea"/><ellipse cx="5" cy="2.2" rx="1.9" ry="0.8" fill="#b0dcf8"/></g><path d="M2.4 6 Q5 9.4 7.8 6.4 L7.4 5.4 Q5 7 2.8 5.2Z" fill="#f2d23c"/><circle cx="8.3" cy="8.2" r="2" fill="#7a7a7a"/><circle cx="8.3" cy="8.2" r="0.65" fill="#d8d8d8"/></svg>
<span class="t" style="left:48.30px;top:337.74px;height:11.5px;line-height:11.5px;font-size:9.6px;color:#111;transform:scaleX(0.8063);">Soft4FX Forex Simulator (1)</span>
<div class="a" style="left:25.6px;top:355.86px;width:7.4px;height:0.8px;background:#d6d6d6;"></div>
<svg class="a" style="left:33.7px;top:349.46000000000004px" width="12" height="11" viewBox="0 0 12 11"><g transform="rotate(-9 5.5 4.5)"><ellipse cx="5.7" cy="4.5" rx="5.5" ry="2.3" fill="#2f86d4"/><ellipse cx="5.5" cy="3.1" rx="3.1" ry="2.4" fill="#5eaeea"/><ellipse cx="5" cy="2.2" rx="1.9" ry="0.8" fill="#b0dcf8"/></g><path d="M2.4 6 Q5 9.4 7.8 6.4 L7.4 5.4 Q5 7 2.8 5.2Z" fill="#f2d23c"/><circle cx="8.3" cy="8.2" r="2" fill="#7a7a7a"/><circle cx="8.3" cy="8.2" r="0.65" fill="#d8d8d8"/></svg>
<span class="t" style="left:48.30px;top:349.46px;height:11.5px;line-height:11.5px;font-size:9.6px;color:#111;transform:scaleX(0.7754);">SourceEA</span>
<div class="a" style="left:25.6px;top:367.58px;width:7.4px;height:0.8px;background:#d6d6d6;"></div>
<svg class="a" style="left:33.7px;top:361.18000000000006px" width="12" height="11" viewBox="0 0 12 11"><g transform="rotate(-9 5.5 4.5)"><ellipse cx="5.7" cy="4.5" rx="5.5" ry="2.3" fill="#2f86d4"/><ellipse cx="5.5" cy="3.1" rx="3.1" ry="2.4" fill="#5eaeea"/><ellipse cx="5" cy="2.2" rx="1.9" ry="0.8" fill="#b0dcf8"/></g><path d="M2.4 6 Q5 9.4 7.8 6.4 L7.4 5.4 Q5 7 2.8 5.2Z" fill="#f2d23c"/><circle cx="8.3" cy="8.2" r="2" fill="#7a7a7a"/><circle cx="8.3" cy="8.2" r="0.65" fill="#d8d8d8"/></svg>
<span class="t" style="left:48.30px;top:361.18px;height:11.5px;line-height:11.5px;font-size:9.6px;color:#111;transform:scaleX(0.7888);">Theorem_5</span>
<div class="a" style="left:25.6px;top:379.3px;width:7.4px;height:0.8px;background:#d6d6d6;"></div>
<svg class="a" style="left:34.5px;top:373.8px" width="10" height="10" viewBox="0 0 10 10"><circle cx="4.7" cy="4.7" r="4.4" fill="#3f8fe0"/><circle cx="4.7" cy="4.7" r="4.4" fill="none" stroke="#2a6ab8" stroke-width="0.5"/><path d="M2 3 Q3.5 1 5 2.2 Q4.8 4 3.4 4.6 Q2.2 4.4 2 3Z M5 5 Q7.5 4.2 7.8 6 Q6.8 8.2 5.4 7.6Z" fill="#7fd050"/><ellipse cx="3.4" cy="2.6" rx="1.6" ry="1" fill="#cfe8ff" opacity="0.6"/></svg>
<span class="t" style="left:48.30px;top:372.90px;height:11.5px;line-height:11.5px;font-size:9.6px;color:#111;transform:scaleX(0.7796);">1036 more...</span>
<svg class="a" style="left:8.3px;top:387.82000000000005px" width="7" height="7" viewBox="0 0 7 7"><rect x="0.4" y="0.4" width="5.4" height="5.4" fill="#fff" stroke="#9aa0b0" stroke-width="0.6"/><path d="M1.6 3.1 H4.6 M3.1 1.6 V4.6" stroke="#3a4a8a" stroke-width="0.7"/></svg>
<div class="a" style="left:14.5px;top:390.82000000000005px;width:5px;height:0.8px;background:#c8c8c8;"></div>
<svg class="a" style="left:20px;top:385.32000000000005px" width="12" height="11" viewBox="0 0 12 11"><path d="M1 1.2 H7.6 Q8.4 2 7.6 3 V7.2 Q8.4 8 7.6 8.8 H1 Q1.8 8 1 7.2 V3 Q0.4 2 1 1.2Z" fill="#f2c83a" stroke="#c89a18" stroke-width="0.5"/><path d="M2.6 3.4 H6 M2.6 5 H6 M2.6 6.6 H6" stroke="#d8a828" stroke-width="0.5"/><circle cx="8.2" cy="8.6" r="1.7" fill="#e8d060" stroke="#777" stroke-width="0.6"/></svg>
<span class="t" style="left:34.20px;top:384.62px;height:11.5px;line-height:11.5px;font-size:9.6px;color:#111;transform:scaleX(0.8013);">Scripts</span>
<div class="a" style="left:155px;top:255.5px;width:10.5px;height:148.5px;background:#f0f0f0;"></div>
<div class="a" style="left:155.5px;top:313.5px;width:9.5px;height:79px;background:#cdcdcd;"></div>
<svg class="a" style="left:156.5px;top:257.3px" width="8" height="8" viewBox="0 0 8 8"><path d="M1.6 5.2 L4 2.8 L6.4 5.2" stroke="#484848" stroke-width="1.05" fill="none"/></svg>
<svg class="a" style="left:156.5px;top:394.2px" width="8" height="8" viewBox="0 0 8 8"><path d="M1.6 2.8 L4 5.2 L6.4 2.8" stroke="#484848" stroke-width="1.05" fill="none"/></svg>
<div class="a" style="left:3px;top:403.8px;width:163px;height:1px;background:#6e6e6e;"></div>
<div class="a" style="left:3.5px;top:403.8px;width:47px;height:14.3px;background:#fff;border:1px solid #444;border-top:none"></div>
<span class="t" style="left:11.00px;top:404.65px;height:11.5px;line-height:11.5px;font-size:9.6px;color:#111;transform:scaleX(0.8350);">Common</span>
<span class="t" style="left:57.30px;top:404.65px;height:11.5px;line-height:11.5px;font-size:9.6px;color:#777;transform:scaleX(0.7705);">Favorites</span>
<div class="a" style="left:95.8px;top:406.3px;width:1px;height:9.3px;background:#8a8a8a;"></div>
<div class="a" style="left:166px;top:66px;width:858px;height:341.5px;background:#f0f0f0;"></div>
<svg class="a" width="1024" height="576" viewBox="0 0 1024 576">
<rect x="170.2" y="65.7" width="852.5" height="341.5" fill="#000"/>
<path d="M171.5 394.5 V67.2 H989.7" stroke="#cccccc" stroke-width="0.7" fill="none"/>
<line x1="172" y1="84.3" x2="989.5" y2="84.3" class="gr"/>
<line x1="172" y1="111.4" x2="989.5" y2="111.4" class="gr"/>
<line x1="172" y1="138.5" x2="989.5" y2="138.5" class="gr"/>
<line x1="172" y1="165.5" x2="989.5" y2="165.5" class="gr"/>
<line x1="172" y1="192.6" x2="989.5" y2="192.6" class="gr"/>
<line x1="172" y1="219.8" x2="989.5" y2="219.8" class="gr"/>
<line x1="172" y1="247.1" x2="989.5" y2="247.1" class="gr"/>
<line x1="172" y1="274.3" x2="989.5" y2="274.3" class="gr"/>
<line x1="172" y1="301.4" x2="989.5" y2="301.4" class="gr"/>
<line x1="172" y1="328.4" x2="989.5" y2="328.4" class="gr"/>
<line x1="172" y1="355.8" x2="989.5" y2="355.8" class="gr"/>
<line x1="172" y1="383.1" x2="989.5" y2="383.1" class="gr"/>
<line x1="197.50" y1="67" x2="197.50" y2="394" class="gr"/>
<line x1="223.10" y1="67" x2="223.10" y2="394" class="gr"/>
<line x1="248.70" y1="67" x2="248.70" y2="394" class="gr"/>
<line x1="274.30" y1="67" x2="274.30" y2="394" class="gr"/>
<line x1="299.90" y1="67" x2="299.90" y2="394" class="gr"/>
<line x1="325.50" y1="67" x2="325.50" y2="394" class="gr"/>
<line x1="351.10" y1="67" x2="351.10" y2="394" class="gr"/>
<line x1="376.70" y1="67" x2="376.70" y2="394" class="gr"/>
<line x1="402.30" y1="67" x2="402.30" y2="394" class="gr"/>
<line x1="427.90" y1="67" x2="427.90" y2="394" class="gr"/>
<line x1="453.50" y1="67" x2="453.50" y2="394" class="gr"/>
<line x1="479.10" y1="67" x2="479.10" y2="394" class="gr"/>
<line x1="504.70" y1="67" x2="504.70" y2="394" class="gr"/>
<line x1="530.30" y1="67" x2="530.30" y2="394" class="gr"/>
<line x1="555.90" y1="67" x2="555.90" y2="394" class="gr"/>
<line x1="581.50" y1="67" x2="581.50" y2="394" class="gr"/>
<line x1="607.10" y1="67" x2="607.10" y2="394" class="gr"/>
<line x1="632.70" y1="67" x2="632.70" y2="394" class="gr"/>
<line x1="658.30" y1="67" x2="658.30" y2="394" class="gr"/>
<line x1="683.90" y1="67" x2="683.90" y2="394" class="gr"/>
<line x1="709.50" y1="67" x2="709.50" y2="394" class="gr"/>
<line x1="735.10" y1="67" x2="735.10" y2="394" class="gr"/>
<line x1="760.70" y1="67" x2="760.70" y2="394" class="gr"/>
<line x1="786.30" y1="67" x2="786.30" y2="394" class="gr"/>
<line x1="811.90" y1="67" x2="811.90" y2="394" class="gr"/>
<line x1="837.51" y1="67" x2="837.51" y2="394" class="gr"/>
<line x1="863.11" y1="67" x2="863.11" y2="394" class="gr"/>
<line x1="888.71" y1="67" x2="888.71" y2="394" class="gr"/>
<line x1="914.31" y1="67" x2="914.31" y2="394" class="gr"/>
<line x1="939.91" y1="67" x2="939.91" y2="394" class="gr"/>
<line x1="965.51" y1="67" x2="965.51" y2="394" class="gr"/>
<line x1="172" y1="87.4" x2="989" y2="87.4" stroke="#14a814" stroke-width="0.7" stroke-dasharray="4.8 3.2 1.4 3.2"/>
<line x1="172" y1="199.3" x2="989.5" y2="199.3" stroke="#98a0a8" stroke-width="0.62"/>
<clipPath id="cc"><rect x="171.9" y="67.5" width="817.6" height="326.8"/></clipPath>
<g clip-path="url(#cc)">
<line x1="171.90" y1="145.0" x2="171.90" y2="184.4" class="wk"/>
<rect x="170.84" y="145.0" width="2.13" height="12.0" class="bh"/>
<line x1="176.17" y1="104.3" x2="176.17" y2="146.0" class="wk"/>
<rect x="175.10" y="129.0" width="2.13" height="16.8" class="bh"/>
<line x1="180.43" y1="118.3" x2="180.43" y2="144.0" class="wk"/>
<rect x="179.37" y="128.0" width="2.13" height="15.6" class="bw"/>
<line x1="184.70" y1="118.3" x2="184.70" y2="146.3" class="wk"/>
<rect x="183.64" y="128.4" width="2.13" height="14.8" class="bh"/>
<line x1="188.97" y1="126.5" x2="188.97" y2="163.5" class="wk"/>
<rect x="187.90" y="128.4" width="2.13" height="25.6" class="bw"/>
<line x1="193.23" y1="145.7" x2="193.23" y2="179.4" class="wk"/>
<rect x="192.17" y="154.0" width="2.13" height="22.8" class="bw"/>
<line x1="197.50" y1="159.7" x2="197.50" y2="192.7" class="wk"/>
<line x1="196.17" y1="176.7" x2="198.84" y2="176.7" class="dj"/>
<line x1="201.77" y1="162.2" x2="201.77" y2="181.6" class="wk"/>
<rect x="200.70" y="172.8" width="2.13" height="3.0" class="bh"/>
<line x1="206.03" y1="166.0" x2="206.03" y2="204.0" class="wk"/>
<rect x="204.97" y="172.4" width="2.13" height="27.3" class="bw"/>
<line x1="210.30" y1="169.2" x2="210.30" y2="199.9" class="wk"/>
<rect x="209.24" y="170.5" width="2.13" height="29.2" class="bh"/>
<line x1="214.57" y1="124.6" x2="214.57" y2="172.8" class="wk"/>
<rect x="213.50" y="125.3" width="2.13" height="44.2" class="bh"/>
<line x1="218.83" y1="90.3" x2="218.83" y2="138.6" class="wk"/>
<rect x="217.77" y="127.2" width="2.13" height="1.5" class="bw"/>
<line x1="223.10" y1="111.3" x2="223.10" y2="161.0" class="wk"/>
<rect x="222.04" y="116.4" width="2.13" height="12.0" class="bh"/>
<line x1="227.37" y1="92.9" x2="227.37" y2="136.7" class="wk"/>
<rect x="226.30" y="109.4" width="2.13" height="8.2" class="bh"/>
<line x1="231.63" y1="102.4" x2="231.63" y2="169.7" class="wk"/>
<rect x="230.57" y="108.1" width="2.13" height="61.4" class="bw"/>
<line x1="235.90" y1="144.4" x2="235.90" y2="175.5" class="wk"/>
<rect x="234.84" y="155.2" width="2.13" height="13.4" class="bh"/>
<line x1="240.17" y1="110.9" x2="240.17" y2="159.7" class="wk"/>
<rect x="239.10" y="116.4" width="2.13" height="39.5" class="bh"/>
<line x1="244.43" y1="103.0" x2="244.43" y2="138.0" class="wk"/>
<rect x="243.37" y="116.4" width="2.13" height="15.2" class="bw"/>
<line x1="248.70" y1="108.8" x2="248.70" y2="135.8" class="wk"/>
<rect x="247.64" y="110.0" width="2.13" height="23.5" class="bh"/>
<line x1="252.97" y1="110.0" x2="252.97" y2="135.4" class="wk"/>
<rect x="251.90" y="111.3" width="2.13" height="16.5" class="bw"/>
<line x1="257.23" y1="109.4" x2="257.23" y2="145.7" class="wk"/>
<rect x="256.17" y="124.9" width="2.13" height="10.5" class="bw"/>
<line x1="261.50" y1="125.3" x2="261.50" y2="154.6" class="wk"/>
<rect x="260.44" y="136.7" width="2.13" height="3.8" class="bw"/>
<line x1="265.77" y1="130.3" x2="265.77" y2="177.8" class="wk"/>
<rect x="264.70" y="140.5" width="2.13" height="35.3" class="bw"/>
<line x1="270.03" y1="173.0" x2="270.03" y2="262.0" class="wk"/>
<rect x="268.97" y="174.3" width="2.13" height="80.5" class="bw"/>
<line x1="274.30" y1="254.0" x2="274.30" y2="341.7" class="wk"/>
<rect x="273.24" y="254.4" width="2.13" height="49.4" class="bw"/>
<line x1="278.57" y1="268.0" x2="278.57" y2="304.2" class="wk"/>
<rect x="277.50" y="281.4" width="2.13" height="22.4" class="bh"/>
<line x1="282.83" y1="257.0" x2="282.83" y2="294.7" class="wk"/>
<rect x="281.77" y="276.0" width="2.13" height="9.0" class="bh"/>
<line x1="287.10" y1="235.3" x2="287.10" y2="284.5" class="wk"/>
<rect x="286.04" y="240.8" width="2.13" height="37.5" class="bh"/>
<line x1="291.37" y1="226.7" x2="291.37" y2="246.0" class="wk"/>
<rect x="290.30" y="241.7" width="2.13" height="2.8" class="bw"/>
<line x1="295.63" y1="172.8" x2="295.63" y2="246.0" class="wk"/>
<rect x="294.57" y="176.7" width="2.13" height="67.8" class="bh"/>
<line x1="299.90" y1="173.6" x2="299.90" y2="215.8" class="wk"/>
<rect x="298.84" y="175.9" width="2.13" height="27.9" class="bw"/>
<line x1="304.17" y1="192.3" x2="304.17" y2="217.3" class="wk"/>
<rect x="303.10" y="203.0" width="2.13" height="5.8" class="bw"/>
<line x1="308.43" y1="198.6" x2="308.43" y2="254.4" class="wk"/>
<rect x="307.37" y="210.0" width="2.13" height="15.2" class="bw"/>
<line x1="312.70" y1="186.0" x2="312.70" y2="229.0" class="wk"/>
<rect x="311.64" y="194.4" width="2.13" height="29.2" class="bh"/>
<line x1="316.97" y1="188.0" x2="316.97" y2="258.4" class="wk"/>
<rect x="315.90" y="193.1" width="2.13" height="48.3" class="bw"/>
<line x1="321.23" y1="183.0" x2="321.23" y2="249.8" class="wk"/>
<rect x="320.17" y="232.5" width="2.13" height="4.4" class="bw"/>
<line x1="325.50" y1="233.8" x2="325.50" y2="286.6" class="wk"/>
<rect x="324.44" y="238.4" width="2.13" height="46.1" class="bw"/>
<line x1="329.77" y1="265.8" x2="329.77" y2="285.3" class="wk"/>
<rect x="328.70" y="273.1" width="2.13" height="9.9" class="bh"/>
<line x1="334.03" y1="259.5" x2="334.03" y2="300.0" class="wk"/>
<rect x="332.97" y="274.7" width="2.13" height="23.9" class="bw"/>
<line x1="338.30" y1="286.9" x2="338.30" y2="314.7" class="wk"/>
<rect x="337.24" y="298.1" width="2.13" height="13.8" class="bw"/>
<line x1="342.57" y1="282.5" x2="342.57" y2="325.2" class="wk"/>
<rect x="341.50" y="283.4" width="2.13" height="29.3" class="bh"/>
<line x1="346.83" y1="276.0" x2="346.83" y2="308.0" class="wk"/>
<rect x="345.77" y="283.0" width="2.13" height="17.6" class="bw"/>
<line x1="351.10" y1="272.0" x2="351.10" y2="308.8" class="wk"/>
<rect x="350.04" y="283.4" width="2.13" height="16.8" class="bh"/>
<line x1="355.37" y1="255.3" x2="355.37" y2="285.3" class="wk"/>
<rect x="354.30" y="258.0" width="2.13" height="25.0" class="bh"/>
<line x1="359.63" y1="247.0" x2="359.63" y2="272.8" class="wk"/>
<rect x="358.57" y="254.0" width="2.13" height="4.4" class="bh"/>
<line x1="363.90" y1="253.8" x2="363.90" y2="285.3" class="wk"/>
<rect x="362.84" y="254.5" width="2.13" height="13.3" class="bw"/>
<line x1="368.17" y1="249.0" x2="368.17" y2="277.5" class="wk"/>
<rect x="367.10" y="254.4" width="2.13" height="15.0" class="bh"/>
<line x1="372.43" y1="249.7" x2="372.43" y2="281.9" class="wk"/>
<rect x="371.37" y="254.0" width="2.13" height="10.2" class="bw"/>
<line x1="376.70" y1="242.3" x2="376.70" y2="266.9" class="wk"/>
<rect x="375.64" y="243.5" width="2.13" height="22.8" class="bh"/>
<line x1="380.97" y1="233.8" x2="380.97" y2="250.0" class="wk"/>
<rect x="379.90" y="238.1" width="2.13" height="7.4" class="bh"/>
<line x1="385.24" y1="229.8" x2="385.24" y2="251.7" class="wk"/>
<rect x="384.17" y="232.2" width="2.13" height="7.5" class="bh"/>
<line x1="389.50" y1="230.3" x2="389.50" y2="246.3" class="wk"/>
<rect x="388.44" y="232.5" width="2.13" height="12.1" class="bw"/>
<line x1="393.77" y1="236.1" x2="393.77" y2="247.0" class="wk"/>
<rect x="392.70" y="239.2" width="2.13" height="6.3" class="bh"/>
<line x1="398.04" y1="233.8" x2="398.04" y2="251.0" class="wk"/>
<rect x="396.97" y="241.1" width="2.13" height="4.9" class="bw"/>
<line x1="402.30" y1="241.6" x2="402.30" y2="254.0" class="wk"/>
<rect x="401.24" y="247.0" width="2.13" height="2.7" class="bw"/>
<line x1="406.57" y1="243.6" x2="406.57" y2="253.3" class="wk"/>
<rect x="405.50" y="245.8" width="2.13" height="3.6" class="bh"/>
<line x1="410.84" y1="245.5" x2="410.84" y2="286.9" class="wk"/>
<rect x="409.77" y="246.3" width="2.13" height="30.4" class="bw"/>
<line x1="415.10" y1="265.8" x2="415.10" y2="281.0" class="wk"/>
<rect x="414.04" y="274.7" width="2.13" height="5.1" class="bw"/>
<line x1="419.37" y1="278.3" x2="419.37" y2="294.0" class="wk"/>
<rect x="418.30" y="279.8" width="2.13" height="13.6" class="bw"/>
<line x1="423.64" y1="292.5" x2="423.64" y2="322.8" class="wk"/>
<rect x="422.57" y="293.4" width="2.13" height="18.5" class="bw"/>
<line x1="427.90" y1="297.8" x2="427.90" y2="313.0" class="wk"/>
<rect x="426.84" y="301.3" width="2.13" height="11.1" class="bh"/>
<line x1="432.17" y1="278.4" x2="432.17" y2="354.0" class="wk"/>
<rect x="431.10" y="301.3" width="2.13" height="7.5" class="bw"/>
<line x1="436.44" y1="298.6" x2="436.44" y2="375.2" class="wk"/>
<rect x="435.37" y="309.0" width="2.13" height="60.7" class="bw"/>
<line x1="440.70" y1="315.8" x2="440.70" y2="379.8" class="wk"/>
<rect x="439.64" y="323.6" width="2.13" height="45.0" class="bh"/>
<line x1="444.97" y1="289.4" x2="444.97" y2="326.0" class="wk"/>
<rect x="443.90" y="294.4" width="2.13" height="29.2" class="bh"/>
<line x1="449.24" y1="272.2" x2="449.24" y2="307.2" class="wk"/>
<rect x="448.17" y="289.4" width="2.13" height="6.1" class="bh"/>
<line x1="453.50" y1="254.2" x2="453.50" y2="291.0" class="wk"/>
<rect x="452.44" y="257.3" width="2.13" height="31.3" class="bh"/>
<line x1="457.77" y1="240.6" x2="457.77" y2="278.4" class="wk"/>
<rect x="456.70" y="257.3" width="2.13" height="18.8" class="bw"/>
<line x1="462.04" y1="255.3" x2="462.04" y2="284.7" class="wk"/>
<rect x="460.97" y="276.0" width="2.13" height="2.8" class="bh"/>
<line x1="466.30" y1="273.0" x2="466.30" y2="285.5" class="wk"/>
<line x1="464.97" y1="275.3" x2="467.64" y2="275.3" class="dj"/>
<line x1="470.57" y1="275.3" x2="470.57" y2="346.0" class="wk"/>
<rect x="469.50" y="276.1" width="2.13" height="60.8" class="bw"/>
<line x1="474.84" y1="303.3" x2="474.84" y2="354.4" class="wk"/>
<rect x="473.77" y="313.4" width="2.13" height="23.2" class="bh"/>
<line x1="479.10" y1="306.4" x2="479.10" y2="331.0" class="wk"/>
<rect x="478.04" y="312.7" width="2.13" height="5.7" class="bw"/>
<line x1="483.37" y1="283.9" x2="483.37" y2="324.7" class="wk"/>
<rect x="482.30" y="289.4" width="2.13" height="29.2" class="bh"/>
<line x1="487.64" y1="285.5" x2="487.64" y2="335.0" class="wk"/>
<rect x="486.57" y="288.6" width="2.13" height="26.7" class="bw"/>
<line x1="491.90" y1="285.5" x2="491.90" y2="327.8" class="wk"/>
<rect x="490.84" y="291.5" width="2.13" height="27.1" class="bh"/>
<line x1="496.17" y1="260.9" x2="496.17" y2="312.7" class="wk"/>
<rect x="495.10" y="293.0" width="2.13" height="17.6" class="bw"/>
<line x1="500.44" y1="300.2" x2="500.44" y2="346.6" class="wk"/>
<rect x="499.37" y="310.3" width="2.13" height="15.3" class="bw"/>
<line x1="504.70" y1="271.4" x2="504.70" y2="326.7" class="wk"/>
<rect x="503.64" y="276.1" width="2.13" height="48.6" class="bh"/>
<line x1="508.97" y1="274.5" x2="508.97" y2="322.8" class="wk"/>
<rect x="507.90" y="276.1" width="2.13" height="31.4" class="bw"/>
<line x1="513.24" y1="276.9" x2="513.24" y2="311.9" class="wk"/>
<rect x="512.17" y="281.3" width="2.13" height="24.3" class="bh"/>
<line x1="517.50" y1="241.3" x2="517.50" y2="287.0" class="wk"/>
<rect x="516.44" y="257.3" width="2.13" height="25.5" class="bh"/>
<line x1="521.77" y1="236.0" x2="521.77" y2="287.2" class="wk"/>
<rect x="520.70" y="256.3" width="2.13" height="30.3" class="bw"/>
<line x1="526.04" y1="254.2" x2="526.04" y2="290.6" class="wk"/>
<rect x="524.97" y="281.3" width="2.13" height="6.2" class="bh"/>
<line x1="530.30" y1="258.1" x2="530.30" y2="299.0" class="wk"/>
<rect x="529.24" y="274.2" width="2.13" height="6.6" class="bh"/>
<line x1="534.57" y1="194.0" x2="534.57" y2="276.0" class="wk"/>
<rect x="533.50" y="241.3" width="2.13" height="34.0" class="bh"/>
<line x1="538.84" y1="223.4" x2="538.84" y2="248.0" class="wk"/>
<line x1="537.50" y1="242.3" x2="540.17" y2="242.3" class="dj"/>
<line x1="543.10" y1="211.6" x2="543.10" y2="249.5" class="wk"/>
<rect x="542.04" y="213.5" width="2.13" height="28.8" class="bh"/>
<line x1="547.37" y1="210.8" x2="547.37" y2="231.0" class="wk"/>
<rect x="546.30" y="215.1" width="2.13" height="14.9" class="bw"/>
<line x1="551.64" y1="173.3" x2="551.64" y2="231.3" class="wk"/>
<rect x="550.57" y="176.1" width="2.13" height="52.5" class="bh"/>
<line x1="555.90" y1="166.0" x2="555.90" y2="213.0" class="wk"/>
<rect x="554.84" y="175.6" width="2.13" height="34.8" class="bw"/>
<line x1="560.17" y1="192.8" x2="560.17" y2="220.2" class="wk"/>
<line x1="558.83" y1="211.3" x2="561.50" y2="211.3" class="dj"/>
<line x1="564.44" y1="194.0" x2="564.44" y2="220.2" class="wk"/>
<rect x="563.37" y="194.4" width="2.13" height="17.5" class="bh"/>
<line x1="568.70" y1="191.3" x2="568.70" y2="226.9" class="wk"/>
<rect x="567.64" y="192.8" width="2.13" height="22.2" class="bw"/>
<line x1="572.97" y1="194.4" x2="572.97" y2="227.6" class="wk"/>
<line x1="571.63" y1="214.5" x2="574.30" y2="214.5" class="dj"/>
<line x1="577.24" y1="186.3" x2="577.24" y2="232.7" class="wk"/>
<rect x="576.17" y="217.1" width="2.13" height="10.2" class="bw"/>
<line x1="581.50" y1="213.5" x2="581.50" y2="250.4" class="wk"/>
<rect x="580.44" y="227.0" width="2.13" height="5.8" class="bw"/>
<line x1="585.77" y1="225.6" x2="585.77" y2="260.8" class="wk"/>
<rect x="584.70" y="233.4" width="2.13" height="15.6" class="bw"/>
<line x1="590.04" y1="221.7" x2="590.04" y2="250.6" class="wk"/>
<rect x="588.97" y="242.0" width="2.13" height="6.9" class="bh"/>
<line x1="594.30" y1="233.4" x2="594.30" y2="294.4" class="wk"/>
<rect x="593.24" y="240.7" width="2.13" height="47.4" class="bw"/>
<line x1="598.57" y1="287.5" x2="598.57" y2="332.8" class="wk"/>
<rect x="597.50" y="288.1" width="2.13" height="40.7" class="bw"/>
<line x1="602.84" y1="316.8" x2="602.84" y2="350.3" class="wk"/>
<rect x="601.77" y="322.5" width="2.13" height="6.7" class="bh"/>
<line x1="607.10" y1="307.8" x2="607.10" y2="354.2" class="wk"/>
<rect x="606.04" y="323.1" width="2.13" height="24.1" class="bw"/>
<line x1="611.37" y1="331.3" x2="611.37" y2="355.0" class="wk"/>
<rect x="610.31" y="339.4" width="2.13" height="7.8" class="bh"/>
<line x1="615.64" y1="332.3" x2="615.64" y2="387.0" class="wk"/>
<rect x="614.57" y="341.3" width="2.13" height="13.4" class="bw"/>
<line x1="619.90" y1="297.2" x2="619.90" y2="363.6" class="wk"/>
<rect x="618.84" y="327.7" width="2.13" height="27.0" class="bh"/>
<line x1="624.17" y1="319.9" x2="624.17" y2="355.8" class="wk"/>
<rect x="623.11" y="327.7" width="2.13" height="7.8" class="bw"/>
<line x1="628.44" y1="280.3" x2="628.44" y2="337.8" class="wk"/>
<rect x="627.37" y="285.3" width="2.13" height="52.2" class="bh"/>
<line x1="632.70" y1="253.4" x2="632.70" y2="292.0" class="wk"/>
<rect x="631.64" y="256.1" width="2.13" height="29.2" class="bh"/>
<line x1="636.97" y1="252.5" x2="636.97" y2="281.6" class="wk"/>
<rect x="635.91" y="257.7" width="2.13" height="2.3" class="bw"/>
<line x1="641.24" y1="258.1" x2="641.24" y2="278.0" class="wk"/>
<rect x="640.17" y="261.6" width="2.13" height="11.2" class="bw"/>
<line x1="645.50" y1="227.2" x2="645.50" y2="273.0" class="wk"/>
<rect x="644.44" y="232.2" width="2.13" height="40.6" class="bh"/>
<line x1="649.77" y1="232.0" x2="649.77" y2="247.2" class="wk"/>
<rect x="648.71" y="233.4" width="2.13" height="7.6" class="bw"/>
<line x1="654.04" y1="240.3" x2="654.04" y2="265.5" class="wk"/>
<rect x="652.97" y="242.0" width="2.13" height="16.4" class="bw"/>
<line x1="658.30" y1="212.3" x2="658.30" y2="260.0" class="wk"/>
<rect x="657.24" y="218.6" width="2.13" height="39.5" class="bh"/>
<line x1="662.57" y1="210.0" x2="662.57" y2="240.5" class="wk"/>
<rect x="661.51" y="218.1" width="2.13" height="21.3" class="bw"/>
<line x1="666.84" y1="226.0" x2="666.84" y2="247.0" class="wk"/>
<rect x="665.77" y="227.2" width="2.13" height="12.5" class="bh"/>
<line x1="671.10" y1="221.6" x2="671.10" y2="241.8" class="wk"/>
<rect x="670.04" y="227.0" width="2.13" height="4.0" class="bw"/>
<line x1="675.37" y1="218.4" x2="675.37" y2="239.5" class="wk"/>
<rect x="674.31" y="230.2" width="2.13" height="4.3" class="bw"/>
<line x1="679.64" y1="218.1" x2="679.64" y2="240.4" class="wk"/>
<rect x="678.57" y="228.6" width="2.13" height="6.2" class="bh"/>
<line x1="683.90" y1="214.5" x2="683.90" y2="235.7" class="wk"/>
<rect x="682.84" y="219.7" width="2.13" height="9.7" class="bh"/>
<line x1="688.17" y1="203.6" x2="688.17" y2="231.0" class="wk"/>
<rect x="687.11" y="219.2" width="2.13" height="7.8" class="bw"/>
<line x1="692.44" y1="219.7" x2="692.44" y2="236.3" class="wk"/>
<rect x="691.37" y="221.9" width="2.13" height="4.4" class="bh"/>
<line x1="696.70" y1="215.0" x2="696.70" y2="234.0" class="wk"/>
<rect x="695.64" y="221.3" width="2.13" height="1.8" class="bw"/>
<line x1="700.97" y1="215.3" x2="700.97" y2="224.0" class="wk"/>
<rect x="699.91" y="221.3" width="2.13" height="2.1" class="bh"/>
<line x1="705.24" y1="213.0" x2="705.24" y2="234.8" class="wk"/>
<rect x="704.17" y="220.3" width="2.13" height="8.7" class="bw"/>
<line x1="709.50" y1="224.7" x2="709.50" y2="244.2" class="wk"/>
<rect x="708.44" y="225.5" width="2.13" height="4.2" class="bh"/>
<line x1="713.77" y1="191.6" x2="713.77" y2="229.0" class="wk"/>
<rect x="712.71" y="193.8" width="2.13" height="32.1" class="bh"/>
<line x1="718.04" y1="192.8" x2="718.04" y2="207.5" class="wk"/>
<rect x="716.97" y="193.1" width="2.13" height="3.8" class="bw"/>
<line x1="722.30" y1="179.0" x2="722.30" y2="198.9" class="wk"/>
<rect x="721.24" y="193.1" width="2.13" height="2.7" class="bh"/>
<line x1="726.57" y1="191.0" x2="726.57" y2="212.0" class="wk"/>
<rect x="725.51" y="193.1" width="2.13" height="18.3" class="bw"/>
<line x1="730.84" y1="200.5" x2="730.84" y2="220.0" class="wk"/>
<rect x="729.77" y="208.3" width="2.13" height="5.5" class="bw"/>
<line x1="735.10" y1="206.7" x2="735.10" y2="231.7" class="wk"/>
<line x1="733.77" y1="214.5" x2="736.44" y2="214.5" class="dj"/>
<line x1="739.37" y1="214.6" x2="739.37" y2="236.0" class="wk"/>
<rect x="738.31" y="215.0" width="2.13" height="20.6" class="bw"/>
<line x1="743.64" y1="233.0" x2="743.64" y2="253.6" class="wk"/>
<rect x="742.57" y="233.3" width="2.13" height="14.0" class="bw"/>
<line x1="747.90" y1="242.6" x2="747.90" y2="251.3" class="wk"/>
<rect x="746.84" y="243.4" width="2.13" height="5.5" class="bh"/>
<line x1="752.17" y1="227.0" x2="752.17" y2="244.2" class="wk"/>
<rect x="751.11" y="240.3" width="2.13" height="2.8" class="bh"/>
<line x1="756.44" y1="228.6" x2="756.44" y2="247.3" class="wk"/>
<rect x="755.37" y="240.6" width="2.13" height="3.6" class="bw"/>
<line x1="760.70" y1="231.7" x2="760.70" y2="245.8" class="wk"/>
<rect x="759.64" y="232.2" width="2.13" height="13.1" class="bh"/>
<line x1="764.97" y1="216.9" x2="764.97" y2="234.2" class="wk"/>
<rect x="763.91" y="223.4" width="2.13" height="10.4" class="bh"/>
<line x1="769.24" y1="222.3" x2="769.24" y2="231.7" class="wk"/>
<rect x="768.17" y="223.9" width="2.13" height="6.3" class="bw"/>
<line x1="773.50" y1="223.9" x2="773.50" y2="233.3" class="wk"/>
<rect x="772.44" y="227.0" width="2.13" height="4.0" class="bh"/>
<line x1="777.77" y1="206.7" x2="777.77" y2="231.0" class="wk"/>
<rect x="776.71" y="208.3" width="2.13" height="17.2" class="bh"/>
<line x1="782.04" y1="195.8" x2="782.04" y2="213.4" class="wk"/>
<rect x="780.97" y="198.9" width="2.13" height="9.4" class="bh"/>
<line x1="786.30" y1="192.2" x2="786.30" y2="207.6" class="wk"/>
<rect x="785.24" y="198.4" width="2.13" height="8.8" class="bw"/>
<line x1="790.57" y1="201.3" x2="790.57" y2="215.6" class="wk"/>
<rect x="789.51" y="205.2" width="2.13" height="7.8" class="bw"/>
<line x1="794.84" y1="208.8" x2="794.84" y2="218.8" class="wk"/>
<rect x="793.77" y="209.4" width="2.13" height="2.5" class="bh"/>
<line x1="799.10" y1="200.9" x2="799.10" y2="213.4" class="wk"/>
<rect x="798.04" y="208.8" width="2.13" height="1.9" class="bw"/>
<line x1="803.37" y1="208.3" x2="803.37" y2="217.7" class="wk"/>
<rect x="802.31" y="211.4" width="2.13" height="2.7" class="bw"/>
<line x1="807.64" y1="198.9" x2="807.64" y2="214.0" class="wk"/>
<rect x="806.57" y="203.1" width="2.13" height="9.1" class="bh"/>
<line x1="811.90" y1="195.0" x2="811.90" y2="207.2" class="wk"/>
<rect x="810.84" y="199.4" width="2.13" height="2.3" class="bh"/>
<line x1="816.17" y1="198.7" x2="816.17" y2="199.3" class="wk"/>
<line x1="814.84" y1="199.0" x2="817.51" y2="199.0" class="dj2"/>
</g>
<line x1="989.7" y1="66.6" x2="989.7" y2="394.6" stroke="#e8e8e8" stroke-width="0.75"/>
<line x1="171.6" y1="394.5" x2="990" y2="394.5" stroke="#e8e8e8" stroke-width="0.75"/>
<line x1="989.7" y1="84.3" x2="992" y2="84.3" stroke="#ddd" stroke-width="0.6"/>
<line x1="989.7" y1="111.4" x2="992" y2="111.4" stroke="#ddd" stroke-width="0.6"/>
<line x1="989.7" y1="138.5" x2="992" y2="138.5" stroke="#ddd" stroke-width="0.6"/>
<line x1="989.7" y1="165.5" x2="992" y2="165.5" stroke="#ddd" stroke-width="0.6"/>
<line x1="989.7" y1="192.6" x2="992" y2="192.6" stroke="#ddd" stroke-width="0.6"/>
<line x1="989.7" y1="219.8" x2="992" y2="219.8" stroke="#ddd" stroke-width="0.6"/>
<line x1="989.7" y1="247.1" x2="992" y2="247.1" stroke="#ddd" stroke-width="0.6"/>
<line x1="989.7" y1="274.3" x2="992" y2="274.3" stroke="#ddd" stroke-width="0.6"/>
<line x1="989.7" y1="301.4" x2="992" y2="301.4" stroke="#ddd" stroke-width="0.6"/>
<line x1="989.7" y1="328.4" x2="992" y2="328.4" stroke="#ddd" stroke-width="0.6"/>
<line x1="989.7" y1="355.8" x2="992" y2="355.8" stroke="#ddd" stroke-width="0.6"/>
<line x1="989.7" y1="383.1" x2="992" y2="383.1" stroke="#ddd" stroke-width="0.6"/>
<line x1="171.90" y1="394.5" x2="171.90" y2="397.2" stroke="#ddd" stroke-width="0.6"/>
<line x1="223.10" y1="394.5" x2="223.10" y2="397.2" stroke="#ddd" stroke-width="0.6"/>
<line x1="274.30" y1="394.5" x2="274.30" y2="397.2" stroke="#ddd" stroke-width="0.6"/>
<line x1="325.50" y1="394.5" x2="325.50" y2="397.2" stroke="#ddd" stroke-width="0.6"/>
<line x1="376.70" y1="394.5" x2="376.70" y2="397.2" stroke="#ddd" stroke-width="0.6"/>
<line x1="427.90" y1="394.5" x2="427.90" y2="397.2" stroke="#ddd" stroke-width="0.6"/>
<line x1="479.10" y1="394.5" x2="479.10" y2="397.2" stroke="#ddd" stroke-width="0.6"/>
<line x1="530.30" y1="394.5" x2="530.30" y2="397.2" stroke="#ddd" stroke-width="0.6"/>
<line x1="581.50" y1="394.5" x2="581.50" y2="397.2" stroke="#ddd" stroke-width="0.6"/>
<line x1="632.70" y1="394.5" x2="632.70" y2="397.2" stroke="#ddd" stroke-width="0.6"/>
<line x1="683.90" y1="394.5" x2="683.90" y2="397.2" stroke="#ddd" stroke-width="0.6"/>
<line x1="735.10" y1="394.5" x2="735.10" y2="397.2" stroke="#ddd" stroke-width="0.6"/>
<line x1="786.30" y1="394.5" x2="786.30" y2="397.2" stroke="#ddd" stroke-width="0.6"/>
<path d="M821.5 67 L827.5 67 L824.5 70.2 Z" fill="#a8b4c0"/>
<rect x="990.2" y="195.8" width="29" height="7.4" fill="#fff"/>
<circle cx="982.7" cy="73.4" r="3.4" fill="none" stroke="#e4e4e4" stroke-width="0.65"/>
<circle cx="981.5" cy="72.5" r="0.55" fill="#eee"/><circle cx="983.9" cy="72.5" r="0.55" fill="#eee"/>
<path d="M980.9 75.4 Q982.7 73.6 984.5 75.4" fill="none" stroke="#eee" stroke-width="0.55"/>
</svg>
<span class="t" style="left:993.00px;top:79.55px;height:9.0px;line-height:9.0px;font-size:7.5px;color:#fff;transform:scaleX(0.8811);">1.20410</span>
<span class="t" style="left:993.00px;top:106.65px;height:9.0px;line-height:9.0px;font-size:7.5px;color:#fff;transform:scaleX(0.8811);">1.20375</span>
<span class="t" style="left:993.00px;top:133.75px;height:9.0px;line-height:9.0px;font-size:7.5px;color:#fff;transform:scaleX(0.8811);">1.20340</span>
<span class="t" style="left:993.00px;top:160.75px;height:9.0px;line-height:9.0px;font-size:7.5px;color:#fff;transform:scaleX(0.8811);">1.20305</span>
<span class="t" style="left:993.00px;top:187.85px;height:9.0px;line-height:9.0px;font-size:7.5px;color:#fff;transform:scaleX(0.8811);">1.20270</span>
<span class="t" style="left:993.00px;top:215.05px;height:9.0px;line-height:9.0px;font-size:7.5px;color:#fff;transform:scaleX(0.8811);">1.20235</span>
<span class="t" style="left:993.00px;top:242.35px;height:9.0px;line-height:9.0px;font-size:7.5px;color:#fff;transform:scaleX(0.8811);">1.20200</span>
<span class="t" style="left:993.00px;top:269.55px;height:9.0px;line-height:9.0px;font-size:7.5px;color:#fff;transform:scaleX(0.8811);">1.20165</span>
<span class="t" style="left:993.00px;top:296.65px;height:9.0px;line-height:9.0px;font-size:7.5px;color:#fff;transform:scaleX(0.8811);">1.20130</span>
<span class="t" style="left:993.00px;top:323.65px;height:9.0px;line-height:9.0px;font-size:7.5px;color:#fff;transform:scaleX(0.8811);">1.20095</span>
<span class="t" style="left:993.00px;top:351.05px;height:9.0px;line-height:9.0px;font-size:7.5px;color:#fff;transform:scaleX(0.8811);">1.20060</span>
<span class="t" style="left:993.00px;top:378.35px;height:9.0px;line-height:9.0px;font-size:7.5px;color:#fff;transform:scaleX(0.8811);">1.20025</span>
<span class="t" style="left:993.00px;top:194.65px;height:9.0px;line-height:9.0px;font-size:7.5px;color:#000;transform:scaleX(0.8811);">1.20261</span>
<span class="t" style="left:171.30px;top:396.35px;height:9.0px;line-height:9.0px;font-size:7.5px;color:#fff;transform:scaleX(0.8642);">3 Feb 2021</span>
<span class="t" style="left:222.50px;top:396.35px;height:9.0px;line-height:9.0px;font-size:7.5px;color:#fff;transform:scaleX(0.8918);">3 Feb 10:05</span>
<span class="t" style="left:273.70px;top:396.35px;height:9.0px;line-height:9.0px;font-size:7.5px;color:#fff;transform:scaleX(0.9042);">3 Feb 11:05</span>
<span class="t" style="left:324.90px;top:396.35px;height:9.0px;line-height:9.0px;font-size:7.5px;color:#fff;transform:scaleX(0.8918);">3 Feb 12:05</span>
<span class="t" style="left:376.10px;top:396.35px;height:9.0px;line-height:9.0px;font-size:7.5px;color:#fff;transform:scaleX(0.8918);">3 Feb 13:05</span>
<span class="t" style="left:427.30px;top:396.35px;height:9.0px;line-height:9.0px;font-size:7.5px;color:#fff;transform:scaleX(0.8918);">3 Feb 14:05</span>
<span class="t" style="left:478.50px;top:396.35px;height:9.0px;line-height:9.0px;font-size:7.5px;color:#fff;transform:scaleX(0.8918);">3 Feb 15:05</span>
<span class="t" style="left:529.70px;top:396.35px;height:9.0px;line-height:9.0px;font-size:7.5px;color:#fff;transform:scaleX(0.8918);">3 Feb 16:05</span>
<span class="t" style="left:580.90px;top:396.35px;height:9.0px;line-height:9.0px;font-size:7.5px;color:#fff;transform:scaleX(0.8918);">3 Feb 17:05</span>
<span class="t" style="left:632.10px;top:396.35px;height:9.0px;line-height:9.0px;font-size:7.5px;color:#fff;transform:scaleX(0.8918);">3 Feb 18:05</span>
<span class="t" style="left:683.30px;top:396.35px;height:9.0px;line-height:9.0px;font-size:7.5px;color:#fff;transform:scaleX(0.8918);">3 Feb 19:05</span>
<span class="t" style="left:734.50px;top:396.35px;height:9.0px;line-height:9.0px;font-size:7.5px;color:#fff;transform:scaleX(0.8918);">3 Feb 20:05</span>
<span class="t" style="left:785.70px;top:396.35px;height:9.0px;line-height:9.0px;font-size:7.5px;color:#fff;transform:scaleX(0.8918);">3 Feb 21:05</span>
<span class="t" style="left:174.00px;top:67.75px;height:9.0px;line-height:9.0px;font-size:7.5px;color:#fff;transform:scaleX(0.8770);">EURUSD,M5  1.20262 1.20262 1.20261 1.20261</span>
<span class="t" style="left:176.30px;top:78.95px;height:9.0px;line-height:9.0px;font-size:7.5px;color:#d8d8d8;transform:scaleX(0.9094);">#931558090 buy 0.01</span>
<span class="t" style="left:941.60px;top:68.75px;height:9.0px;line-height:9.0px;font-size:7.5px;color:#fff;transform:scaleX(0.8079);">Pegasus Pro</span>
<div class="a" style="left:166px;top:407.2px;width:858px;height:16px;background:#f0f0f0;"></div>
<div class="a" style="left:0px;top:420.9px;width:1024px;height:0.8px;background:#d2d2d2;"></div>
<div class="a" style="left:172.9px;top:408px;width:58px;height:13.8px;background:#fff;border:1px solid #8a8a8a;border-top-color:#dcdcdc;border-bottom-color:#5a5a5a;border-radius:1.5px"></div>
<span class="t" style="left:180.70px;top:409.55px;height:11.2px;line-height:11.2px;font-size:9.3px;color:#111;transform:scaleX(0.7706);">EURUSD,M5</span>
<span class="t" style="left:238.00px;top:409.55px;height:11.2px;line-height:11.2px;font-size:9.3px;color:#888;transform:scaleX(0.7918);">EURUSD,Daily</span>
<div class="a" style="left:293.8px;top:411px;width:1px;height:9px;background:#8a8a8a;"></div>
<svg class="a" style="left:1000px;top:410.5px" width="20" height="8" viewBox="0 0 20 8"><path d="M4.6 2 L2.6 4 L4.6 6Z M13.6 2 L15.6 4 L13.6 6Z" fill="#b0b0b0"/></svg>
<div class="a" style="left:0px;top:423px;width:1024px;height:117px;background:#f0f0f0;"></div>
<svg class="a" style="left:1.25px;top:424.2px" width="8" height="8" viewBox="0 0 8 8"><path d="M2.1 2.1 L5.9 5.9 M5.9 2.1 L2.1 5.9" stroke="#111" stroke-width="1.3" fill="none"/></svg>
<div class="a" style="left:1.9px;top:434px;width:8.1px;height:103px;background:linear-gradient(#e4ecf6,#9fb8dc);"></div>
<span class="t" style="left:2px;top:535.6px;font-size:8.3px;color:#1a2a50;transform-origin:0 0;transform:rotate(-90deg) scaleX(0.93);height:9px;line-height:9px">Terminal</span>
<div class="a" style="left:11px;top:424.5px;width:1010px;height:98px;background:#fff;"></div>
<div class="a" style="left:11px;top:423.6px;width:1010px;height:1px;background:#a6a6a6;"></div>
<div class="a" style="left:11px;top:439px;width:1010px;height:0.8px;background:#e2e2e2;"></div>
<span class="t" style="left:14.75px;top:426.10px;height:11.5px;line-height:11.5px;font-size:9.6px;color:#111;transform:scaleX(0.8071);">Order</span>
<span class="t" style="left:26.00px;top:439.50px;height:11.5px;line-height:11.5px;font-size:9.6px;color:#111;transform:scaleX(0.7995);">931558090</span>
<div class="a" style="left:109.8px;top:425px;width:0.8px;height:27.3px;background:#e0e0e0;"></div>
<span class="t" style="left:228.70px;top:426.10px;height:11.5px;line-height:11.5px;font-size:9.6px;color:#111;transform:scaleX(0.8584);">Time</span>
<span class="t" style="left:177.70px;top:439.50px;height:11.5px;line-height:11.5px;font-size:9.6px;color:#111;transform:scaleX(0.7838);">2021.02.02 15:00:42</span>
<div class="a" style="left:249.0px;top:425px;width:0.8px;height:27.3px;background:#e0e0e0;"></div>
<span class="t" style="left:296.90px;top:426.10px;height:11.5px;line-height:11.5px;font-size:9.6px;color:#111;transform:scaleX(0.9129);">Type</span>
<span class="t" style="left:302.50px;top:439.50px;height:11.5px;line-height:11.5px;font-size:9.6px;color:#111;transform:scaleX(0.8663);">buy</span>
<div class="a" style="left:318.2px;top:425px;width:0.8px;height:27.3px;background:#e0e0e0;"></div>
<span class="t" style="left:354.40px;top:426.10px;height:11.5px;line-height:11.5px;font-size:9.6px;color:#111;transform:scaleX(0.8194);">Size</span>
<span class="t" style="left:355.40px;top:439.50px;height:11.5px;line-height:11.5px;font-size:9.6px;color:#111;transform:scaleX(0.7652);">0.01</span>
<div class="a" style="left:372.0px;top:425px;width:0.8px;height:27.3px;background:#e0e0e0;"></div>
<span class="t" style="left:412.40px;top:426.10px;height:11.5px;line-height:11.5px;font-size:9.6px;color:#111;transform:scaleX(0.8281);">Symbol</span>
<span class="t" style="left:415.70px;top:439.50px;height:11.5px;line-height:11.5px;font-size:9.6px;color:#111;transform:scaleX(0.7906);">eurusd</span>
<div class="a" style="left:441.2px;top:425px;width:0.8px;height:27.3px;background:#e0e0e0;"></div>
<span class="t" style="left:497.00px;top:426.10px;height:11.5px;line-height:11.5px;font-size:9.6px;color:#111;transform:scaleX(0.8555);">Price</span>
<span class="t" style="left:488.80px;top:439.50px;height:11.5px;line-height:11.5px;font-size:9.6px;color:#111;transform:scaleX(0.7755);">1.20405</span>
<div class="a" style="left:518.0px;top:425px;width:0.8px;height:27.3px;background:#e0e0e0;"></div>
<span class="t" style="left:576.20px;top:426.10px;height:11.5px;line-height:11.5px;font-size:9.6px;color:#111;transform:scaleX(0.8361);">S / L</span>
<span class="t" style="left:565.20px;top:439.50px;height:11.5px;line-height:11.5px;font-size:9.6px;color:#111;transform:scaleX(0.7928);">0.00000</span>
<div class="a" style="left:595.0px;top:425px;width:0.8px;height:27.3px;background:#e0e0e0;"></div>
<span class="t" style="left:652.50px;top:426.10px;height:11.5px;line-height:11.5px;font-size:9.6px;color:#111;transform:scaleX(0.8460);">T / P</span>
<span class="t" style="left:642.00px;top:439.50px;height:11.5px;line-height:11.5px;font-size:9.6px;color:#111;transform:scaleX(0.7928);">0.00000</span>
<div class="a" style="left:671.8px;top:425px;width:0.8px;height:27.3px;background:#e0e0e0;"></div>
<span class="t" style="left:727.50px;top:426.10px;height:11.5px;line-height:11.5px;font-size:9.6px;color:#111;transform:scaleX(0.8555);">Price</span>
<span class="t" style="left:719.30px;top:439.50px;height:11.5px;line-height:11.5px;font-size:9.6px;color:#111;transform:scaleX(0.7755);">1.20261</span>
<div class="a" style="left:748.5px;top:425px;width:0.8px;height:27.3px;background:#e0e0e0;"></div>
<span class="t" style="left:779.50px;top:426.10px;height:11.5px;line-height:11.5px;font-size:9.6px;color:#111;transform:scaleX(0.8279);">Commission</span>
<span class="t" style="left:808.90px;top:439.50px;height:11.5px;line-height:11.5px;font-size:9.6px;color:#111;transform:scaleX(0.7652);">0.00</span>
<div class="a" style="left:825.5px;top:425px;width:0.8px;height:27.3px;background:#e0e0e0;"></div>
<span class="t" style="left:879.90px;top:426.10px;height:11.5px;line-height:11.5px;font-size:9.6px;color:#111;transform:scaleX(0.8333);">Swap</span>
<span class="t" style="left:885.60px;top:439.50px;height:11.5px;line-height:11.5px;font-size:9.6px;color:#111;transform:scaleX(0.7652);">0.00</span>
<div class="a" style="left:902.2px;top:425px;width:0.8px;height:27.3px;background:#e0e0e0;"></div>
<span class="t" style="left:997.70px;top:426.10px;height:11.5px;line-height:11.5px;font-size:9.6px;color:#111;transform:scaleX(0.8926);">Profit</span>
<span class="t" style="left:988.00px;top:439.50px;height:11.5px;line-height:11.5px;font-size:9.6px;color:#111;transform:scaleX(0.7909);">-1.44</span>
<svg class="a" style="left:40px;top:429px" width="6" height="6" viewBox="0 0 6 6"><path d="M1.5 4.5 L3.7 1.5" stroke="#888" stroke-width="0.6"/></svg>
<svg class="a" style="left:12.6px;top:440.7px" width="11" height="12" viewBox="0 0 11 12"><path d="M1 0.6 H5.8 L8.4 3.2 V10 H1Z" fill="#fff" stroke="#777" stroke-width="0.7"/><path d="M5.8 0.6 V3.2 H8.4" fill="none" stroke="#777" stroke-width="0.6"/><circle cx="7.8" cy="8.6" r="2.1" fill="#2a8ae0"/><circle cx="7.3" cy="8" r="0.8" fill="#8fc8ff"/></svg>
<svg class="a" style="left:1009.9px;top:441.9px" width="8" height="8" viewBox="0 0 8 8"><path d="M1.1 1.1 L6.9 6.9 M6.9 1.1 L1.1 6.9" stroke="#555" stroke-width="0.8" fill="none"/></svg>
<div class="a" style="left:11px;top:452.2px;width:1010px;height:13px;background:#c6c6c6;"></div>
<svg class="a" style="left:13.3px;top:454.3px" width="10" height="10" viewBox="0 0 10 10"><rect x="0.4" y="0.4" width="8.4" height="8.4" fill="#fff" stroke="#999" stroke-width="0.6"/><path d="M4.6 7.4 L7 4.8 H5.6 V2.2 H3.6 V4.8 H2.2 Z" fill="#e03c1c"/></svg>
<span class="t" style="left:25.90px;top:453.75px;height:11.0px;line-height:11.0px;font-size:9.2px;color:#111;transform:scaleX(0.8322);font-weight:bold;">Balance: 19.22 USD</span>
<span class="t" style="left:103.00px;top:453.75px;height:11.0px;line-height:11.0px;font-size:9.2px;color:#111;transform:scaleX(0.8503);font-weight:bold;">Equity: 17.78</span>
<span class="t" style="left:156.80px;top:453.75px;height:11.0px;line-height:11.0px;font-size:9.2px;color:#111;transform:scaleX(0.8562);font-weight:bold;">Margin: 2.41</span>
<span class="t" style="left:208.30px;top:453.75px;height:11.0px;line-height:11.0px;font-size:9.2px;color:#111;transform:scaleX(0.8510);font-weight:bold;">Free margin: 15.37</span>
<span class="t" style="left:283.00px;top:453.75px;height:11.0px;line-height:11.0px;font-size:9.2px;color:#111;transform:scaleX(0.8633);font-weight:bold;">Margin level: 738.34%</span>
<span class="t" style="left:985.80px;top:453.75px;height:11.0px;line-height:11.0px;font-size:9.2px;color:#111;transform:scaleX(0.9306);font-weight:bold;">-1.44</span>
<div class="a" style="left:11px;top:522px;width:1010px;height:1.1px;background:#8a8a8a;"></div>
<div class="a" style="left:11.5px;top:522px;width:34px;height:14.2px;background:#fff;border:1px solid #444;border-top:none"></div>
<span class="t" style="left:19.30px;top:523.40px;height:11.5px;line-height:11.5px;font-size:9.6px;color:#111;transform:scaleX(0.7970);">Trade</span>
<span class="t" style="left:53.00px;top:523.40px;height:11.5px;line-height:11.5px;font-size:9.6px;color:#777;transform:scaleX(0.7772);">Exposure</span>
<span class="t" style="left:98.00px;top:523.40px;height:11.5px;line-height:11.5px;font-size:9.6px;color:#777;transform:scaleX(0.8335);">Account History</span>
<span class="t" style="left:167.70px;top:523.40px;height:11.5px;line-height:11.5px;font-size:9.6px;color:#777;transform:scaleX(0.7833);">News</span>
<span class="t" style="left:188.30px;top:528.00px;height:8.9px;line-height:8.9px;font-size:7.4px;color:#e02020;transform:scaleX(0.9000);font-weight:bold;">18</span>
<span class="t" style="left:209.00px;top:523.40px;height:11.5px;line-height:11.5px;font-size:9.6px;color:#777;transform:scaleX(0.8357);">Alerts</span>
<span class="t" style="left:242.70px;top:523.40px;height:11.5px;line-height:11.5px;font-size:9.6px;color:#777;transform:scaleX(0.8711);">Mailbox</span>
<span class="t" style="left:285.00px;top:523.40px;height:11.5px;line-height:11.5px;font-size:9.6px;color:#777;transform:scaleX(0.8354);">Market</span>
<span class="t" style="left:311.30px;top:528.00px;height:8.9px;line-height:8.9px;font-size:7.4px;color:#e02020;transform:scaleX(0.9000);font-weight:bold;">117</span>
<span class="t" style="left:335.50px;top:523.40px;height:11.5px;line-height:11.5px;font-size:9.6px;color:#777;transform:scaleX(0.7944);">Signals</span>
<span class="t" style="left:374.00px;top:523.40px;height:11.5px;line-height:11.5px;font-size:9.6px;color:#777;transform:scaleX(0.8266);">Articles</span>
<span class="t" style="left:413.30px;top:523.40px;height:11.5px;line-height:11.5px;font-size:9.6px;color:#777;transform:scaleX(0.7837);">Code Base</span>
<span class="t" style="left:464.00px;top:523.40px;height:11.5px;line-height:11.5px;font-size:9.6px;color:#777;transform:scaleX(0.7839);">Experts</span>
<span class="t" style="left:502.70px;top:523.40px;height:11.5px;line-height:11.5px;font-size:9.6px;color:#777;transform:scaleX(0.8040);">Journal</span>
<div class="a" style="left:91.3px;top:525px;width:0.9px;height:9.5px;background:#9c9c9c;"></div>
<div class="a" style="left:161px;top:525px;width:0.9px;height:9.5px;background:#9c9c9c;"></div>
<div class="a" style="left:201.5px;top:525px;width:0.9px;height:9.5px;background:#9c9c9c;"></div>
<div class="a" style="left:236px;top:525px;width:0.9px;height:9.5px;background:#9c9c9c;"></div>
<div class="a" style="left:278.3px;top:525px;width:0.9px;height:9.5px;background:#9c9c9c;"></div>
<div class="a" style="left:328.3px;top:525px;width:0.9px;height:9.5px;background:#9c9c9c;"></div>
<div class="a" style="left:367.3px;top:525px;width:0.9px;height:9.5px;background:#9c9c9c;"></div>
<div class="a" style="left:406.7px;top:525px;width:0.9px;height:9.5px;background:#9c9c9c;"></div>
<div class="a" style="left:457.3px;top:525px;width:0.9px;height:9.5px;background:#9c9c9c;"></div>
<div class="a" style="left:496px;top:525px;width:0.9px;height:9.5px;background:#9c9c9c;"></div>
<div class="a" style="left:535px;top:525px;width:0.9px;height:9.5px;background:#9c9c9c;"></div>
<div class="a" style="left:0px;top:540px;width:1024px;height:16px;background:#f0f0f0;"></div>
<div class="a" style="left:0px;top:538.8px;width:1024px;height:1.2px;background:#e2e2e2;"></div>
<span class="t" style="left:1.50px;top:542.70px;height:11.5px;line-height:11.5px;font-size:9.6px;color:#111;transform:scaleX(0.7740);">For Help, press F1</span>
<span class="t" style="left:562.00px;top:542.70px;height:11.5px;line-height:11.5px;font-size:9.6px;color:#111;transform:scaleX(0.8617);">Default</span>
<div class="a" style="left:558.7px;top:543px;width:0.8px;height:12px;background:#cfcfcf;"></div>
<div class="a" style="left:638.7px;top:543px;width:0.8px;height:12px;background:#cfcfcf;"></div>
<div class="a" style="left:707.3px;top:543px;width:0.8px;height:12px;background:#cfcfcf;"></div>
<div class="a" style="left:755.3px;top:543px;width:0.8px;height:12px;background:#cfcfcf;"></div>
<div class="a" style="left:803px;top:543px;width:0.8px;height:12px;background:#cfcfcf;"></div>
<div class="a" style="left:849px;top:543px;width:0.8px;height:12px;background:#cfcfcf;"></div>
<div class="a" style="left:895px;top:543px;width:0.8px;height:12px;background:#cfcfcf;"></div>
<div class="a" style="left:939px;top:543px;width:0.8px;height:12px;background:#cfcfcf;"></div>
<svg class="a" style="left:942.5px;top:544px" width="17" height="9" viewBox="0 0 17 9"><rect x="0.00" y="0" width="1.4" height="8.6" fill="#6a9418"/><rect x="1.87" y="0" width="1.4" height="8.6" fill="#6a9418"/><rect x="3.74" y="0" width="1.4" height="8.6" fill="#6a9418"/><rect x="5.61" y="0" width="1.4" height="8.6" fill="#6a9418"/><rect x="7.48" y="0" width="1.4" height="8.6" fill="#6a9418"/><rect x="9.35" y="0" width="1.4" height="8.6" fill="#6a9418"/><rect x="11.22" y="0" width="1.4" height="8.6" fill="#6a9418"/><rect x="13.09" y="0" width="1.4" height="8.6" fill="#6a9418"/><rect x="14.96" y="0" width="1.4" height="8.6" fill="#6a9418"/><path d="M0 8.6 L0 7 L16.6 1.6 L16.6 8.6Z" fill="#1e5f88"/><rect x="1.30" y="0" width="0.5" height="8.6" fill="#f0f0f0"/><rect x="3.17" y="0" width="0.5" height="8.6" fill="#f0f0f0"/><rect x="5.04" y="0" width="0.5" height="8.6" fill="#f0f0f0"/><rect x="6.91" y="0" width="0.5" height="8.6" fill="#f0f0f0"/><rect x="8.78" y="0" width="0.5" height="8.6" fill="#f0f0f0"/><rect x="10.65" y="0" width="0.5" height="8.6" fill="#f0f0f0"/><rect x="12.52" y="0" width="0.5" height="8.6" fill="#f0f0f0"/><rect x="14.39" y="0" width="0.5" height="8.6" fill="#f0f0f0"/><rect x="16.26" y="0" width="0.5" height="8.6" fill="#f0f0f0"/></svg>
<span class="t" style="left:962.30px;top:542.70px;height:11.5px;line-height:11.5px;font-size:9.6px;color:#111;transform:scaleX(0.8258);">40/1 kb</span>
<div class="a" style="left:0px;top:556px;width:1024px;height:20px;background:linear-gradient(90deg,#2b2c29 0%,#262723 25%,#1e1f1d 45%,#161718 60%,#17181a 100%);"></div>
<svg class="a" style="left:0px;top:0px" width="1024" height="576" viewBox="0 0 1024 576"><rect x="196.4" y="556" width="24" height="20" fill="#3a3a38"/><rect x="245.2" y="556" width="24" height="20" fill="#454543"/><rect x="101.4" y="574.4" width="17.599999999999994" height="1.6" fill="#d6c595"/><rect x="196.4" y="574.4" width="24.0" height="1.6" fill="#d6c595"/><rect x="223.2" y="574.4" width="17.400000000000006" height="1.6" fill="#d6c595"/><rect x="245.2" y="574.4" width="24.0" height="1.6" fill="#d6c595"/><path d="M6 561.4 L10.6 560.7 V565.2 H6Z M11.3 560.6 L17 559.7 V565.2 H11.3Z M6 565.9 H10.6 V570.4 L6 569.7Z M11.3 565.9 H17 V571.4 L11.3 570.5Z" fill="#fff"/><circle cx="37.4" cy="563.6" r="3.5" fill="none" stroke="#fff" stroke-width="0.9"/><path d="M35 566.2 L30.4 570.8" stroke="#fff" stroke-width="0.9"/><circle cx="59.6" cy="565.6" r="4.6" fill="none" stroke="#fff" stroke-width="1.4"/><rect x="78.8" y="562.4" width="6.6" height="6.4" fill="none" stroke="#fff" stroke-width="0.9"/><path d="M78.4 560.4 H85.8 M78.4 570.8 H85.8 M88.2 560.2 V571" stroke="#fff" stroke-width="0.9"/><rect x="87.4" y="564" width="1.6" height="3" fill="#fff"/><path d="M105.2 561 H109 L110 562.2 H114.8 V570 H105.2Z" fill="#f7c94a"/><rect x="105.2" y="563.6" width="9.6" height="6.4" fill="#fbdc7a"/><rect x="107.4" y="566.8" width="5.2" height="3.2" fill="#3f8fe0"/><ellipse cx="133.8" cy="565.6" rx="4.9" ry="5.3" fill="#e8202a"/><ellipse cx="133.8" cy="565.6" rx="2.1" ry="3.7" fill="#1d1d1c"/><rect x="154.6" y="560.4" width="9.8" height="10" rx="1" fill="#b8130f"/><path d="M157 568 Q159 564.6 159.2 562.4 Q160 565.6 162.4 566.8 Q159.4 566.6 157 568Z" fill="none" stroke="#fff" stroke-width="0.7"/><circle cx="183.6" cy="565.8" r="5.2" fill="#ff9a1a"/><circle cx="183.2" cy="566.4" r="3.1" fill="#7a3ad8"/><path d="M178.6 564 Q180.4 559.8 184.6 560.4 Q182.6 562 184 563.6 Q186 563.4 186.6 565.4 Q185 564.6 183.6 565.4 Q181.6 565 180.6 563.4Z" fill="#ffce3a"/><path d="M178.5 565 Q179 570.8 184 571 Q188.4 570.6 188.8 565.8 Q187.8 569 184 569 Q180 568.6 178.5 565Z" fill="#ff4a3a"/><circle cx="208.4" cy="565.6" r="5.2" fill="#e8453c"/><path d="M208.4 565.6 L203.9 563 A5.2 5.2 0 0 0 208.6 570.8 L211 566.8Z" fill="#2fa84f"/><path d="M208.4 565.6 L213 565.4 A5.2 5.2 0 0 1 208.6 570.8 L210.8 567Z" fill="#fbc116"/><circle cx="208.4" cy="565.6" r="2.4" fill="#fff"/><circle cx="208.4" cy="565.6" r="1.8" fill="#3f85f4"/><rect x="230" y="560.6" width="8.4" height="10" rx="0.6" fill="#3f8fe8"/><rect x="230" y="564" width="8.4" height="3.2" fill="#2a72d0"/><rect x="227.2" y="562.6" width="6.4" height="6.4" rx="0.6" fill="#1a56b8"/><text x="230.4" y="567.8" font-family="Liberation Sans,sans-serif" font-weight="bold" font-size="5" fill="#fff" text-anchor="middle">W</text><rect x="252" y="560.4" width="10.4" height="10.4" rx="0.8" fill="#3f8f35"/><rect x="252.6" y="561" width="9.2" height="9.2" rx="0.5" fill="#2f7a2a"/><text x="257.2" y="567.4" font-family="Liberation Sans,sans-serif" font-weight="bold" font-size="4.4" fill="#fff" text-anchor="middle">FBS</text><path d="M879.4 567.6 L883.4 563.8 L887.4 567.6" stroke="#fff" stroke-width="0.9" fill="none"/><path d="M896 570 A7 7 0 0 1 903 563" stroke="#ddd" stroke-width="0.7" fill="none"/><path d="M898 570 A5 5 0 0 1 903 565" stroke="#ddd" stroke-width="0.7" fill="none"/><path d="M900 570 A3 3 0 0 1 903 567" stroke="#ddd" stroke-width="0.7" fill="none"/><circle cx="902.6" cy="569.6" r="0.7" fill="#fff"/><rect x="910.4" y="563" width="9" height="5.4" fill="none" stroke="#fff" stroke-width="0.7"/><rect x="911.4" y="564" width="6" height="3.4" fill="#fff"/><rect x="919.6" y="564.6" width="0.9" height="2.2" fill="#fff"/><path d="M997 560.6 H1007.4 V568.4 H1003.4 L1002.2 569.8 L1001 568.4 H997Z" fill="#fff"/><path d="M999 562.8 H1005.4 M999 564.6 H1005.4 M999 566.2 H1005.4" stroke="#888" stroke-width="0.5"/><path d="M1021.2 556 V576" stroke="#555" stroke-width="0.6"/></svg>
<span class="t" style="left:928.20px;top:561.50px;height:10.3px;line-height:10.3px;font-size:8.6px;color:#fff;transform:scaleX(0.8054);">ENG</span>
<span class="t" style="left:951.40px;top:561.50px;height:10.3px;line-height:10.3px;font-size:8.6px;color:#fff;transform:scaleX(0.9170);">12:38 AM</span>
</body></html>
